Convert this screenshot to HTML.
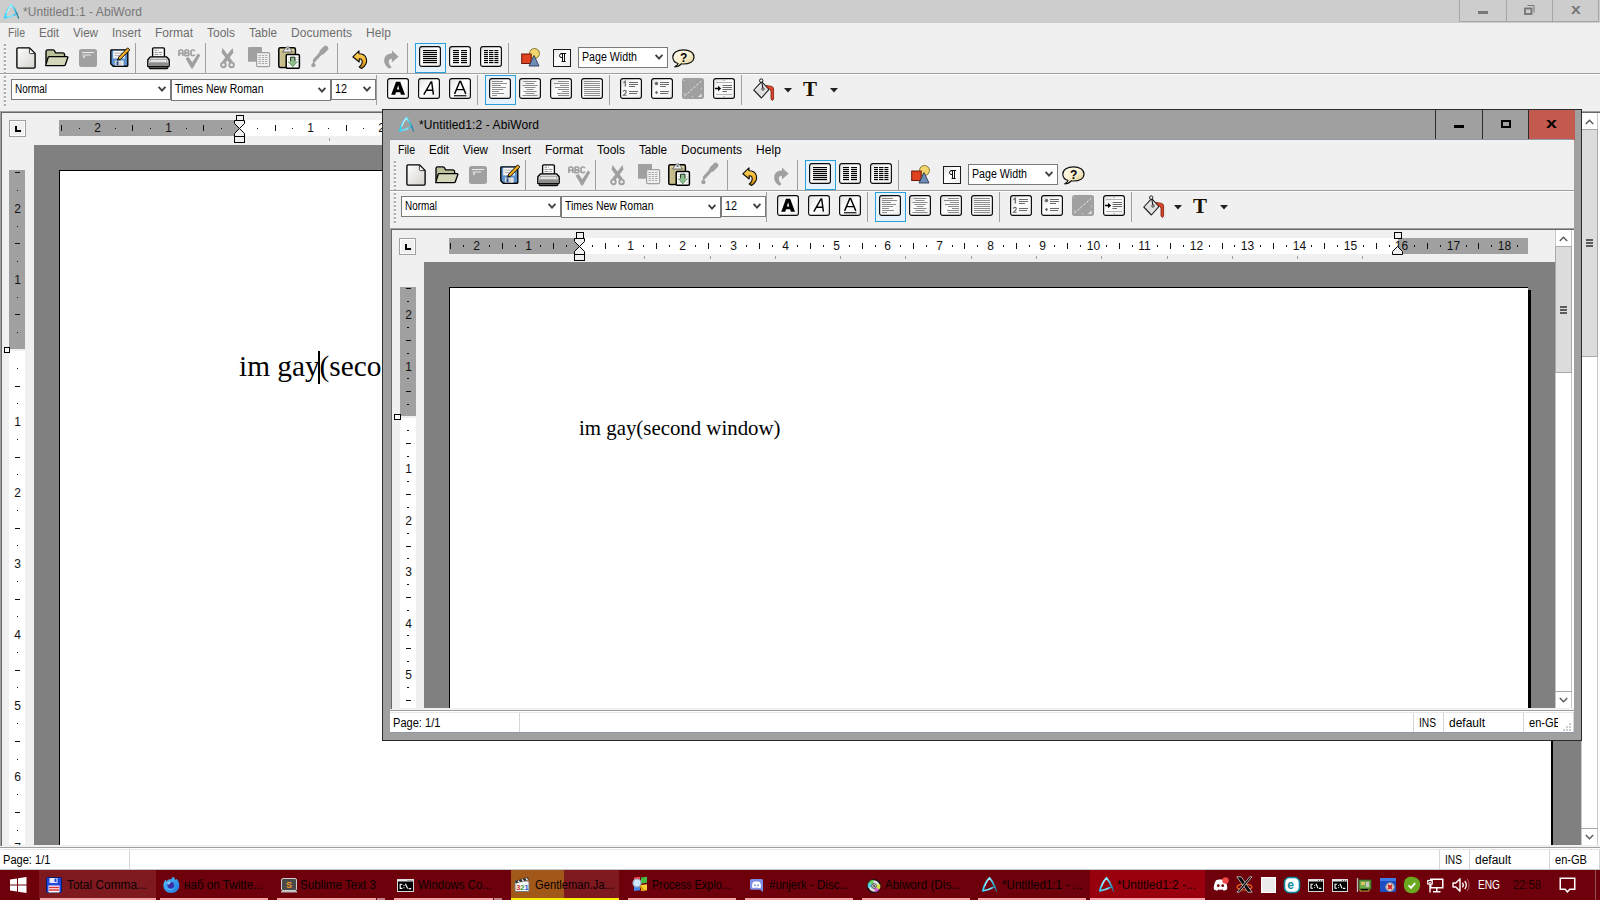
<!DOCTYPE html><html><head><meta charset="utf-8"><title>AbiWord</title><style>
html,body{margin:0;padding:0}
body{width:1600px;height:900px;overflow:hidden;position:relative;background:#f0f0f0;font-family:"Liberation Sans",sans-serif}
div,svg{position:absolute;box-sizing:border-box}
svg{overflow:visible}
.w{overflow:hidden}

</style></head><body>
<div style="left:0px;top:0px;width:1600px;height:23px;background:#cdcdcd;"></div>
<svg style="left:2.5px;top:2.5px;" width="17" height="17" viewBox="0 0 17 17"><defs><linearGradient id="ag1" gradientUnits="userSpaceOnUse" x1="1" y1="0" x2="16" y2="0"><stop offset="0" stop-color="#1cd2ff"/><stop offset="0.35" stop-color="#6fe4ff"/><stop offset="0.55" stop-color="#7fe6ff"/><stop offset="0.75" stop-color="#34b4d8"/><stop offset="1" stop-color="#1f6c8c"/></linearGradient></defs><path d="M12 11.6 C9 13.3 5.4 14.4 1.8 14.9 C3 10 5.5 4.7 8.5 1.8 C10.8 4.2 12.8 8 14 11.2" fill="none" stroke="url(#ag1)" stroke-width="1.75" stroke-linecap="round" stroke-linejoin="round"/><path d="M13.6 10.2 C14.4 12 15 13.6 15.5 15.1" fill="none" stroke="url(#ag1)" stroke-width="1.25" stroke-linecap="round"/><path d="M4 10 C5.2 6.8 6.8 4.1 8.3 2.7" fill="none" stroke="#fff" stroke-width="0.75" stroke-linecap="round" opacity="0.8"/></svg>
<div style="left:23px;top:3.84px;font:normal normal 12px/16px 'Liberation Sans',sans-serif;color:#777;white-space:pre;letter-spacing:0.055px;">*Untitled1:1 - AbiWord</div>
<div style="left:1459px;top:-1px;width:48px;height:23px;background:#cdcdcd;border:1px solid #a6a6a6;"></div>
<div style="left:1506px;top:-1px;width:47px;height:23px;background:#cdcdcd;border:1px solid #a6a6a6;"></div>
<div style="left:1552px;top:-1px;width:47px;height:23px;background:#cdcdcd;border:1px solid #a6a6a6;"></div>
<div style="left:1478px;top:11px;width:10px;height:3px;background:#787878;"></div>
<svg style="left:1524px;top:5px;" width="11" height="10" viewBox="0 0 11 10"><path d="M3.5 0.5 H10 V7.5" fill="none" stroke="#787878" stroke-width="1"/><rect x="1" y="3.5" width="6.5" height="5.5" fill="none" stroke="#787878" stroke-width="1.9"/></svg>
<div style="left:1571px;top:0.15px;font:normal bold 14px/19px 'Liberation Sans',sans-serif;color:#787878;white-space:pre;transform:scaleX(1.25);transform-origin:0 0;">x</div>
<div class="w" style="left:0px;top:23px;width:1600px;height:847px;background:#f0f0f0;"><div style="left:0px;top:0px;width:1600px;height:20px;background:#f0f0f0;"></div><div style="left:8px;top:1.84px;font:normal normal 12px/16px 'Liberation Sans',sans-serif;color:#6d6d6d;white-space:pre;transform:scaleX(0.8792);transform-origin:0 0;">File</div><div style="left:39px;top:1.84px;font:normal normal 12px/16px 'Liberation Sans',sans-serif;color:#6d6d6d;white-space:pre;transform:scaleX(0.9672);transform-origin:0 0;">Edit</div><div style="left:73px;top:1.84px;font:normal normal 12px/16px 'Liberation Sans',sans-serif;color:#6d6d6d;white-space:pre;transform:scaleX(0.9692);transform-origin:0 0;">View</div><div style="left:112px;top:1.84px;font:normal normal 12px/16px 'Liberation Sans',sans-serif;color:#6d6d6d;white-space:pre;transform:scaleX(0.9663);transform-origin:0 0;">Insert</div><div style="left:155px;top:1.84px;font:normal normal 12px/16px 'Liberation Sans',sans-serif;color:#6d6d6d;white-space:pre;transform:scaleX(0.9999);transform-origin:0 0;">Format</div><div style="left:207px;top:1.84px;font:normal normal 12px/16px 'Liberation Sans',sans-serif;color:#6d6d6d;white-space:pre;transform:scaleX(0.9995);transform-origin:0 0;">Tools</div><div style="left:249px;top:1.84px;font:normal normal 12px/16px 'Liberation Sans',sans-serif;color:#6d6d6d;white-space:pre;transform:scaleX(0.9760);transform-origin:0 0;">Table</div><div style="left:291px;top:1.84px;font:normal normal 12px/16px 'Liberation Sans',sans-serif;color:#6d6d6d;white-space:pre;letter-spacing:0.039px;">Documents</div><div style="left:366px;top:1.84px;font:normal normal 12px/16px 'Liberation Sans',sans-serif;color:#6d6d6d;white-space:pre;letter-spacing:0.107px;">Help</div><svg style="left:3px;top:21px;" width="3" height="30" viewBox="0 0 3 30"><rect x="1" y="0" width="2" height="2" fill="#adadad"/><rect x="0" y="1" width="1" height="1" fill="#cfcfcf"/><rect x="1" y="2" width="2" height="1" fill="#fbfbfb"/><rect x="1" y="4" width="2" height="2" fill="#adadad"/><rect x="0" y="5" width="1" height="1" fill="#cfcfcf"/><rect x="1" y="6" width="2" height="1" fill="#fbfbfb"/><rect x="1" y="8" width="2" height="2" fill="#adadad"/><rect x="0" y="9" width="1" height="1" fill="#cfcfcf"/><rect x="1" y="10" width="2" height="1" fill="#fbfbfb"/><rect x="1" y="12" width="2" height="2" fill="#adadad"/><rect x="0" y="13" width="1" height="1" fill="#cfcfcf"/><rect x="1" y="14" width="2" height="1" fill="#fbfbfb"/><rect x="1" y="16" width="2" height="2" fill="#adadad"/><rect x="0" y="17" width="1" height="1" fill="#cfcfcf"/><rect x="1" y="18" width="2" height="1" fill="#fbfbfb"/><rect x="1" y="20" width="2" height="2" fill="#adadad"/><rect x="0" y="21" width="1" height="1" fill="#cfcfcf"/><rect x="1" y="22" width="2" height="1" fill="#fbfbfb"/><rect x="1" y="24" width="2" height="2" fill="#adadad"/><rect x="0" y="25" width="1" height="1" fill="#cfcfcf"/><rect x="1" y="26" width="2" height="1" fill="#fbfbfb"/><rect x="1" y="28" width="2" height="2" fill="#adadad"/><rect x="0" y="29" width="1" height="1" fill="#cfcfcf"/><rect x="1" y="30" width="2" height="1" fill="#fbfbfb"/></svg><svg style="left:0px;top:0px;" width="1" height="1" viewBox="0 0 1 1"><defs><linearGradient id="bg" x1="0" y1="0" x2="1" y2="1"><stop offset="0" stop-color="#e2e2e2"/><stop offset="0.45" stop-color="#ffffff"/><stop offset="1" stop-color="#ececec"/></linearGradient><linearGradient id="bk" x1="0" y1="0" x2="1" y2="1"><stop offset="0" stop-color="#f4f4f4"/><stop offset="0.5" stop-color="#dcdcdc"/><stop offset="1" stop-color="#f0f0f0"/></linearGradient><linearGradient id="hb" x1="0" y1="0" x2="0.8" y2="1"><stop offset="0" stop-color="#fffdf2"/><stop offset="0.55" stop-color="#faf0d0"/><stop offset="1" stop-color="#dcc98e"/></linearGradient><linearGradient id="pg" x1="0" y1="0" x2="1" y2="1"><stop offset="0" stop-color="#ffffff"/><stop offset="1" stop-color="#d4d2cc"/></linearGradient></defs></svg><svg style="left:16px;top:24px;" width="20" height="22" viewBox="0 0 20 22"><path d="M2 0.9 H13.6 L19.1 6.4 V20 Q19.1 21.1 18 21.1 H2 Q0.9 21.1 0.9 20 V2 Q0.9 0.9 2 0.9 Z" fill="url(#pg)" stroke="#000" stroke-width="1.35" stroke-linejoin="round"/><path d="M13.4 1.2 V5.6 Q13.4 6.6 14.4 6.6 H18.8 Z" fill="#fafaf6" stroke="#2a2a2a" stroke-width="0.9" stroke-linejoin="round"/></svg><svg style="left:45px;top:26px;" width="24" height="18" viewBox="0 0 24 18"><path d="M1 14.5 V2.6 Q1 0.9 2.8 0.9 H8 Q9.3 0.9 9.8 2.2 L10.4 3.9 H17.6 Q19.6 3.9 19.6 5.8 V8" fill="#bdc29c" stroke="#000" stroke-width="1.35" stroke-linejoin="round"/><path d="M1 16.6 Q0.6 16.6 0.9 15.6 L3.2 8.3 Q3.5 7.6 4.4 7.6 H22 Q23.1 7.6 22.8 8.6 L20.3 15.8 Q20 16.6 19 16.6 Z" fill="#d3d6b8" stroke="#000" stroke-width="1.35" stroke-linejoin="round"/></svg><svg style="left:79px;top:26px;" width="18" height="18" viewBox="0 0 18 18"><rect x="0" y="0" width="18" height="18" rx="2.5" fill="#a0a0a0"/><path d="M3 3.5 H15 M3.5 6 H12" stroke="#ececec" stroke-width="1.1" fill="none"/><path d="M3.8 7.2 H6.6 L4.6 9.6 Z" fill="#ececec"/></svg><svg style="left:110px;top:24px;" width="21" height="21" viewBox="0 0 21 21"><path d="M1.6 2.8 H17 Q17.8 2.8 17.8 3.6 V18.4 Q17.8 19.2 17 19.2 H3.2 L0.8 16.8 V3.6 Q0.8 2.8 1.6 2.8 Z" fill="#5a90cc" stroke="#000" stroke-width="1.35" stroke-linejoin="round"/><rect x="3.2" y="3.8" width="11.6" height="7.6" fill="#f6f6f6"/><path d="M4.5 6.2 H12 M4.5 8.6 H10.5" stroke="#aaa" stroke-width="0.9"/><rect x="4.8" y="13.6" width="9" height="5" fill="#d4d4d4"/><rect x="6.6" y="14.4" width="1.8" height="3.8" fill="#23498a"/><path d="M12 13.6 V18.6" stroke="#fff" stroke-width="0.8"/><path d="M17.6 0.8 L19.8 3 L10.6 12.2 L7.6 13.2 L8.6 10.2 Z" fill="#f2ae22" stroke="#0c0c0c" stroke-width="1" stroke-linejoin="round"/><path d="M7.6 13.2 L8.3 11 L9.9 12.5 Z" fill="#222"/></svg><div style="left:135px;top:20px;width:1px;height:30px;background:#a0a0a0;"></div><svg style="left:147px;top:24px;" width="23" height="23" viewBox="0 0 23 23"><path d="M5.6 11 V1.8 Q5.6 0.8 6.6 0.8 H16.4 Q17.4 0.8 17.4 1.8 V11 Z" fill="#fff" stroke="#000" stroke-width="1.35"/><path d="M7.6 3.2 H10 M11.2 3.2 H12 M7.6 5.4 H10.6 M11.6 5.4 H15.4 M7.6 7.6 H11.4 M12.6 7.6 H14.6 M7.6 9.8 H15.4" stroke="#8a8a8a" stroke-width="1"/><path d="M0.8 19.4 V13.4 Q0.8 12.6 1.4 12 L3.6 9.8 H19.4 L21.6 12 Q22.2 12.6 22.2 13.4 V18.8 Q22.2 19.6 21.4 19.6 H1.6 Q0.8 19.6 0.8 18.8 Z" fill="#d9d9d9" stroke="#000" stroke-width="1.35" stroke-linejoin="round"/><rect x="1.6" y="15.6" width="19.8" height="3.4" fill="#8e8e8a"/><rect x="3.2" y="12.6" width="16.6" height="2.8" fill="#fbfbfb" stroke="#777" stroke-width="0.5"/><path d="M4.5 14 H18.5" stroke="#999" stroke-width="0.8" stroke-dasharray="1.2 0.8"/><path d="M2.2 19.8 H20.8 V20.8 Q20.8 21.6 20 21.6 H3 Q2.2 21.6 2.2 20.8 Z" fill="#6e6e6a" stroke="#0c0c0c" stroke-width="1.1"/></svg><svg style="left:178px;top:26px;" width="23" height="20" viewBox="0 0 23 20"><g fill="none" stroke="#a0a0a0" stroke-width="1.7" stroke-linejoin="round"><path d="M0.9 7 V2.6 Q0.9 1 2.5 1 H3.3 Q4.9 1 4.9 2.6 V7 M0.9 4.4 H4.9"/><path d="M7 1 V6.6 H9.6 Q11 6.6 11 5.2 Q11 3.8 9.6 3.8 H7 M9.4 3.8 Q10.7 3.8 10.7 2.4 Q10.7 1 9.4 1 H7"/><path d="M16.8 2.2 Q16.4 1 15 1 H14.6 Q13 1 13 2.8 V4.8 Q13 6.6 14.6 6.6 H15 Q16.4 6.6 16.8 5.4"/></g><path d="M7.6 9.6 L10.6 8 L14.2 13.2 L20 4.4 L22.3 6.2 L14.8 19.4 L13.4 19.4 Z" fill="#a0a0a0"/></svg><div style="left:205px;top:20px;width:1px;height:30px;background:#a0a0a0;"></div><svg style="left:220px;top:25px;" width="16" height="21" viewBox="0 0 16 21"><path d="M2.4 0 L5.2 3.4 L12.8 13.6 L10 15.8 L1.6 4.4 Z" fill="#a0a0a0"/><path d="M12.6 0 L9.8 3.4 L2.2 13.6 L5 15.8 L13.4 4.4 Z" fill="#a0a0a0"/><circle cx="3.4" cy="16.9" r="2.3" fill="#f0f0f0" stroke="#a0a0a0" stroke-width="1.9"/><circle cx="11.6" cy="16.9" r="2.3" fill="#f0f0f0" stroke="#a0a0a0" stroke-width="1.9"/></svg><svg style="left:248px;top:24px;" width="23" height="21" viewBox="0 0 23 21"><rect x="0" y="0" width="14" height="14.8" rx="1" fill="#a0a0a0"/><rect x="8.6" y="5.6" width="13" height="14" rx="1.2" fill="#f0f0f0" stroke="#a0a0a0" stroke-width="1.2"/><path d="M10.5 8.5 H19.5 M10.5 10.5 H19.5 M10.5 12.5 H19.5 M10.5 14.5 H19.5 M10.5 16.5 H19.5" stroke="#a8a8a8" stroke-width="1" stroke-dasharray="2.3 1"/></svg><svg style="left:278px;top:23px;" width="23" height="24" viewBox="0 0 23 24"><rect x="0.8" y="1.8" width="16.6" height="19.6" rx="1.5" fill="#d9cf9f" stroke="#000" stroke-width="1.5"/><path d="M2.5 6 H16 M2.5 8 H16 M2.5 10 H16 M2.5 12 H16 M2.5 14 H16 M2.5 16 H16 M2.5 18 H16 M2.5 20 H16" stroke="#a89e6e" stroke-width="0.8"/><path d="M4.6 6 L7 2.6 Q8 0.8 9.6 0.8 Q11.2 0.8 12.2 2.6 L14.4 6 Z" fill="#e8e8e8" stroke="#555" stroke-width="0.8"/><rect x="8.6" y="2.2" width="2" height="1.6" fill="#666"/><rect x="8.2" y="8.6" width="13.2" height="13.6" rx="1.2" fill="#fff" stroke="#000" stroke-width="1.5"/><path d="M10 11.5 H11.6 M18.2 11.5 H19.8 M10 13.5 H11.6 M18.2 13.5 H19.8 M10 19.5 H11.6 M18.2 19.5 H19.8" stroke="#c4c4c4" stroke-width="0.8"/><path d="M12.6 11.2 H17 V15.4 H19.6 L14.8 20.8 L10 15.4 H12.6 Z" fill="#8fc08f"/><path d="M12.6 15.4 V11.2 H17 V15.4" fill="none" stroke="#1a2a1a" stroke-width="1"/><path d="M10 15.4 L14.8 20.8 L19.6 15.4" fill="none" stroke="#5c8c5c" stroke-width="0.9"/></svg><svg style="left:311px;top:23px;" width="18" height="22" viewBox="0 0 18 22"><path d="M14.6 2.4 L11.2 5.8" stroke="#a0a0a0" stroke-width="5.4" stroke-linecap="round"/><path d="M10.6 6.4 L3.4 14.4" stroke="#a0a0a0" stroke-width="3.2" fill="none" stroke-linecap="round"/><path d="M3.2 14.6 L2.4 17.4" stroke="#a0a0a0" stroke-width="1.6"/><circle cx="2.4" cy="19.2" r="2.1" fill="#a0a0a0"/></svg><div style="left:337px;top:20px;width:1px;height:30px;background:#a0a0a0;"></div><svg style="left:352px;top:27px;" width="16" height="19" viewBox="0 0 16 19"><defs><linearGradient id="ug" x1="0" y1="0" x2="0" y2="1"><stop offset="0" stop-color="#ffe070"/><stop offset="0.5" stop-color="#f2b430"/><stop offset="1" stop-color="#c88410"/></linearGradient></defs><path d="M7 0.8 L0.8 6.8 L7.2 12 V8.8 C9.6 8.8 10.8 10.6 10 13.2 C9.5 14.8 8.4 16.2 7.2 17 L9.6 18.4 C13.2 16.6 15.4 12.6 14.4 8.8 C13.4 5.2 10.4 3.8 7 3.8 Z" fill="url(#ug)" stroke="#0c0c0c" stroke-width="1.1" stroke-linejoin="round"/></svg><svg style="left:383px;top:27px;" width="16" height="19" viewBox="0 0 16 19"><path d="M9 0.4 L15.6 6.8 L8.8 12.4 V8.8 C6.4 8.8 5.2 10.6 6 13.2 C6.5 14.8 7.6 16.2 8.8 17 L6.4 18.8 C2.6 16.8 0.4 12.6 1.4 8.6 C2.4 5 5.4 3.6 9 3.6 Z" fill="#a0a0a0"/></svg><div style="left:407px;top:20px;width:1px;height:30px;background:#a0a0a0;"></div><div style="left:415px;top:20px;width:31px;height:30px;background:#e5f1fb;border:1px solid #2aa0da;"></div><svg style="left:419px;top:23px;" width="22" height="21" viewBox="0 0 22 21"><rect x="0.6" y="0.6" width="20.8" height="19.8" rx="2.2" fill="url(#bg)" stroke="#0a0a0a" stroke-width="1.15"/><rect x="4" y="4" width="14" height="1.15" fill="#000"/><rect x="4" y="6" width="14" height="1.15" fill="#000"/><rect x="4" y="8" width="14" height="1.15" fill="#000"/><rect x="4" y="10" width="14" height="1.15" fill="#000"/><rect x="4" y="12" width="14" height="1.15" fill="#000"/><rect x="4" y="14" width="14" height="1.15" fill="#000"/><rect x="4" y="16" width="14" height="1.15" fill="#000"/></svg><svg style="left:449px;top:23px;" width="22" height="21" viewBox="0 0 22 21"><rect x="0.6" y="0.6" width="20.8" height="19.8" rx="2.2" fill="url(#bg)" stroke="#0a0a0a" stroke-width="1.15"/><rect x="4" y="4" width="6" height="1.15" fill="#000"/><rect x="4" y="6" width="6" height="1.15" fill="#000"/><rect x="4" y="8" width="6" height="1.15" fill="#000"/><rect x="4" y="10" width="6" height="1.15" fill="#000"/><rect x="4" y="12" width="6" height="1.15" fill="#000"/><rect x="4" y="14" width="6" height="1.15" fill="#000"/><rect x="4" y="16" width="6" height="1.15" fill="#000"/><rect x="12" y="4" width="6" height="1.15" fill="#000"/><rect x="12" y="6" width="6" height="1.15" fill="#000"/><rect x="12" y="8" width="6" height="1.15" fill="#000"/><rect x="12" y="10" width="6" height="1.15" fill="#000"/><rect x="12" y="12" width="6" height="1.15" fill="#000"/><rect x="12" y="14" width="6" height="1.15" fill="#000"/><rect x="12" y="16" width="6" height="1.15" fill="#000"/></svg><svg style="left:480px;top:23px;" width="22" height="21" viewBox="0 0 22 21"><rect x="0.6" y="0.6" width="20.8" height="19.8" rx="2.2" fill="url(#bg)" stroke="#0a0a0a" stroke-width="1.15"/><rect x="4" y="4" width="4" height="1.15" fill="#000"/><rect x="4" y="6" width="4" height="1.15" fill="#000"/><rect x="4" y="8" width="4" height="1.15" fill="#000"/><rect x="4" y="10" width="4" height="1.15" fill="#000"/><rect x="4" y="12" width="4" height="1.15" fill="#000"/><rect x="4" y="14" width="4" height="1.15" fill="#000"/><rect x="4" y="16" width="4" height="1.15" fill="#000"/><rect x="9" y="4" width="4.4" height="1.15" fill="#000"/><rect x="9" y="6" width="4.4" height="1.15" fill="#000"/><rect x="9" y="8" width="4.4" height="1.15" fill="#000"/><rect x="9" y="10" width="4.4" height="1.15" fill="#000"/><rect x="9" y="12" width="4.4" height="1.15" fill="#000"/><rect x="9" y="14" width="4.4" height="1.15" fill="#000"/><rect x="9" y="16" width="4.4" height="1.15" fill="#000"/><rect x="14.4" y="4" width="3.9999999999999982" height="1.15" fill="#000"/><rect x="14.4" y="6" width="3.9999999999999982" height="1.15" fill="#000"/><rect x="14.4" y="8" width="3.9999999999999982" height="1.15" fill="#000"/><rect x="14.4" y="10" width="3.9999999999999982" height="1.15" fill="#000"/><rect x="14.4" y="12" width="3.9999999999999982" height="1.15" fill="#000"/><rect x="14.4" y="14" width="3.9999999999999982" height="1.15" fill="#000"/><rect x="14.4" y="16" width="3.9999999999999982" height="1.15" fill="#000"/></svg><div style="left:508px;top:20px;width:1px;height:30px;background:#a0a0a0;"></div><svg style="left:521px;top:25px;" width="20" height="19" viewBox="0 0 20 19"><circle cx="13.5" cy="5.5" r="5" fill="#f2d66d" stroke="#7a6a2a" stroke-width="0.9"/><rect x="0.7" y="6" width="9.5" height="9.5" fill="#e0421e" stroke="#6a1a0a" stroke-width="1"/><path d="M13 7.5 L18 18 H8 Z" fill="#6d8db5" stroke="#2a3a55" stroke-width="0.9"/></svg><svg style="left:553px;top:26px;" width="18" height="18" viewBox="0 0 18 18"><rect x="0.5" y="0.5" width="17" height="17" fill="url(#bg)" stroke="#1a1a1a"/><path d="M9.5 4.5 V12.5 M11.5 4.5 V12.5 M7.6 4.5 H13.2 M8.6 12.5 H12.6" fill="none" stroke="#000" stroke-width="0.95"/><path d="M9.5 4.5 Q6.4 4.5 6.4 6.6 Q6.4 8.7 9.5 8.7" fill="none" stroke="#000" stroke-width="0.95"/></svg><div style="left:578px;top:24px;width:90px;height:21px;background:#fff;border:1px solid #7a7a7a;"></div><div style="left:581.5px;top:25.67px;font:normal normal 12.5px/17px 'Liberation Sans',sans-serif;color:#000;white-space:pre;transform:scaleX(0.8512);transform-origin:0 0;">Page Width</div><svg style="left:655px;top:31px;" width="8" height="7" viewBox="0 0 8 7"><path d="M0.6 0.9 L4 4.6 L7.4 0.9" fill="none" stroke="#404040" stroke-width="1.9"/></svg><svg style="left:672px;top:26px;" width="23" height="19" viewBox="0 0 23 19"><path d="M6 14.5 C2.5 13.5 0.8 11 0.8 8 C0.8 3.5 5.5 0.8 11.5 0.8 C17.5 0.8 22 3.5 22 8 C22 12.5 17.5 15 11.5 15 C10.8 15 10 15 9.3 14.8 C7.5 16.8 5 17.8 2.5 17.8 C4.5 17 5.8 15.8 6 14.5 Z" fill="url(#hb)" stroke="#111" stroke-width="1.2"/><text x="8" y="12.5" font-family="Liberation Sans" font-weight="bold" font-size="12" fill="#000">?</text></svg><div style="left:0px;top:50px;width:1600px;height:1px;background:#a0a0a0;"></div><div style="left:0px;top:51px;width:1600px;height:1px;background:#fdfdfd;"></div><svg style="left:3px;top:53px;" width="3" height="32" viewBox="0 0 3 32"><rect x="1" y="0" width="2" height="2" fill="#adadad"/><rect x="0" y="1" width="1" height="1" fill="#cfcfcf"/><rect x="1" y="2" width="2" height="1" fill="#fbfbfb"/><rect x="1" y="4" width="2" height="2" fill="#adadad"/><rect x="0" y="5" width="1" height="1" fill="#cfcfcf"/><rect x="1" y="6" width="2" height="1" fill="#fbfbfb"/><rect x="1" y="8" width="2" height="2" fill="#adadad"/><rect x="0" y="9" width="1" height="1" fill="#cfcfcf"/><rect x="1" y="10" width="2" height="1" fill="#fbfbfb"/><rect x="1" y="12" width="2" height="2" fill="#adadad"/><rect x="0" y="13" width="1" height="1" fill="#cfcfcf"/><rect x="1" y="14" width="2" height="1" fill="#fbfbfb"/><rect x="1" y="16" width="2" height="2" fill="#adadad"/><rect x="0" y="17" width="1" height="1" fill="#cfcfcf"/><rect x="1" y="18" width="2" height="1" fill="#fbfbfb"/><rect x="1" y="20" width="2" height="2" fill="#adadad"/><rect x="0" y="21" width="1" height="1" fill="#cfcfcf"/><rect x="1" y="22" width="2" height="1" fill="#fbfbfb"/><rect x="1" y="24" width="2" height="2" fill="#adadad"/><rect x="0" y="25" width="1" height="1" fill="#cfcfcf"/><rect x="1" y="26" width="2" height="1" fill="#fbfbfb"/><rect x="1" y="28" width="2" height="2" fill="#adadad"/><rect x="0" y="29" width="1" height="1" fill="#cfcfcf"/><rect x="1" y="30" width="2" height="1" fill="#fbfbfb"/></svg><div style="left:11px;top:56px;width:160px;height:21px;background:#fff;border:1px solid #7a7a7a;"></div><div style="left:14.5px;top:57.67px;font:normal normal 12.5px/17px 'Liberation Sans',sans-serif;color:#000;white-space:pre;transform:scaleX(0.7944);transform-origin:0 0;">Normal</div><svg style="left:158px;top:63px;" width="8" height="7" viewBox="0 0 8 7"><path d="M0.6 0.9 L4 4.6 L7.4 0.9" fill="none" stroke="#404040" stroke-width="1.9"/></svg><div style="left:171px;top:56px;width:160px;height:22px;background:#fff;border:1px solid #7a7a7a;"></div><div style="left:174.5px;top:57.67px;font:normal normal 12.5px/17px 'Liberation Sans',sans-serif;color:#000;white-space:pre;transform:scaleX(0.8364);transform-origin:0 0;">Times New Roman</div><svg style="left:318px;top:64px;" width="8" height="7" viewBox="0 0 8 7"><path d="M0.6 0.9 L4 4.6 L7.4 0.9" fill="none" stroke="#404040" stroke-width="1.9"/></svg><div style="left:331px;top:56px;width:45px;height:21px;background:#fff;border:1px solid #7a7a7a;"></div><div style="left:334.5px;top:57.67px;font:normal normal 12.5px/17px 'Liberation Sans',sans-serif;color:#000;white-space:pre;transform:scaleX(0.8631);transform-origin:0 0;">12</div><svg style="left:363px;top:63px;" width="8" height="7" viewBox="0 0 8 7"><path d="M0.6 0.9 L4 4.6 L7.4 0.9" fill="none" stroke="#404040" stroke-width="1.9"/></svg><div style="left:376px;top:52px;width:1px;height:30px;background:#a0a0a0;"></div><svg style="left:387px;top:55px;" width="22" height="21" viewBox="0 0 22 21"><rect x="0.6" y="0.6" width="20.8" height="19.8" rx="2.2" fill="url(#bg)" stroke="#0a0a0a" stroke-width="1.15"/><path d="M4.2 16.7 L9 3.7 H13.2 L18 16.7 H13.9 L13.2 14.3 H9 L8.3 16.7 Z M9.9 11.5 H12.3 L11.1 7.3 Z" fill="#000" fill-rule="evenodd"/></svg><svg style="left:418px;top:55px;" width="22" height="21" viewBox="0 0 22 21"><rect x="0.6" y="0.6" width="20.8" height="19.8" rx="2.2" fill="url(#bg)" stroke="#0a0a0a" stroke-width="1.15"/><path d="M5.8 16.7 L13 3.9 H13.7 L15.4 16.7 M8.5 12.2 H14.7" fill="none" stroke="#000" stroke-width="1.45"/></svg><svg style="left:449px;top:55px;" width="22" height="21" viewBox="0 0 22 21"><rect x="0.6" y="0.6" width="20.8" height="19.8" rx="2.2" fill="url(#bg)" stroke="#0a0a0a" stroke-width="1.15"/><path d="M5.6 15.9 L10.8 3.4 H11.6 L16.8 15.9 M7.5 11.6 H14.9" fill="none" stroke="#000" stroke-width="1.45"/><rect x="5" y="17.2" width="12.4" height="1.1" fill="#000"/></svg><div style="left:477px;top:52px;width:1px;height:30px;background:#a0a0a0;"></div><div style="left:485px;top:52px;width:31px;height:30px;background:#e5f1fb;border:1px solid #2aa0da;"></div><svg style="left:489px;top:55px;" width="22" height="21" viewBox="0 0 22 21"><rect x="0.6" y="0.6" width="20.8" height="19.8" rx="2.2" fill="url(#bg)" stroke="#0a0a0a" stroke-width="1.15"/><rect x="3" y="3" width="0" height="1" fill="#8c8c8c"/><rect x="3" y="5" width="0" height="1" fill="#8c8c8c"/><rect x="3" y="7" width="0" height="1" fill="#8c8c8c"/><rect x="3" y="9" width="0" height="1" fill="#8c8c8c"/><rect x="3" y="11" width="0" height="1" fill="#8c8c8c"/><rect x="3" y="13" width="0" height="1" fill="#8c8c8c"/><rect x="3" y="15" width="0" height="1" fill="#8c8c8c"/><rect x="3" y="17" width="0" height="1" fill="#8c8c8c"/><rect x="3" y="3" width="11" height="1" fill="#8c8c8c"/><rect x="3" y="5" width="15" height="1" fill="#8c8c8c"/><rect x="3" y="7" width="9" height="1" fill="#8c8c8c"/><rect x="3" y="9" width="14" height="1" fill="#8c8c8c"/><rect x="3" y="11" width="11" height="1" fill="#8c8c8c"/><rect x="3" y="13" width="7" height="1" fill="#8c8c8c"/><rect x="3" y="15" width="12" height="1" fill="#8c8c8c"/><rect x="3" y="17" width="5" height="1" fill="#8c8c8c"/></svg><svg style="left:519px;top:55px;" width="22" height="21" viewBox="0 0 22 21"><rect x="0.6" y="0.6" width="20.8" height="19.8" rx="2.2" fill="url(#bg)" stroke="#0a0a0a" stroke-width="1.15"/><rect x="4.5" y="3" width="13" height="1" fill="#8c8c8c"/><rect x="6.5" y="5" width="9" height="1" fill="#8c8c8c"/><rect x="3.5" y="7" width="15" height="1" fill="#8c8c8c"/><rect x="5.5" y="9" width="11" height="1" fill="#8c8c8c"/><rect x="7.5" y="11" width="7" height="1" fill="#8c8c8c"/><rect x="4.5" y="13" width="13" height="1" fill="#8c8c8c"/><rect x="6.5" y="15" width="9" height="1" fill="#8c8c8c"/><rect x="3.5" y="17" width="15" height="1" fill="#8c8c8c"/></svg><svg style="left:550px;top:55px;" width="22" height="21" viewBox="0 0 22 21"><rect x="0.6" y="0.6" width="20.8" height="19.8" rx="2.2" fill="url(#bg)" stroke="#0a0a0a" stroke-width="1.15"/><rect x="8" y="3" width="11" height="1" fill="#8c8c8c"/><rect x="4" y="5" width="15" height="1" fill="#8c8c8c"/><rect x="10" y="7" width="9" height="1" fill="#8c8c8c"/><rect x="5" y="9" width="14" height="1" fill="#8c8c8c"/><rect x="8" y="11" width="11" height="1" fill="#8c8c8c"/><rect x="12" y="13" width="7" height="1" fill="#8c8c8c"/><rect x="7" y="15" width="12" height="1" fill="#8c8c8c"/><rect x="8" y="17" width="11" height="1" fill="#8c8c8c"/></svg><svg style="left:581px;top:55px;" width="22" height="21" viewBox="0 0 22 21"><rect x="0.6" y="0.6" width="20.8" height="19.8" rx="2.2" fill="url(#bg)" stroke="#0a0a0a" stroke-width="1.15"/><rect x="3" y="3" width="16" height="1" fill="#8c8c8c"/><rect x="3" y="5" width="16" height="1" fill="#8c8c8c"/><rect x="3" y="7" width="16" height="1" fill="#8c8c8c"/><rect x="3" y="9" width="16" height="1" fill="#8c8c8c"/><rect x="3" y="11" width="16" height="1" fill="#8c8c8c"/><rect x="3" y="13" width="16" height="1" fill="#8c8c8c"/><rect x="3" y="15" width="16" height="1" fill="#8c8c8c"/><rect x="3" y="17" width="16" height="1" fill="#8c8c8c"/></svg><div style="left:609px;top:52px;width:1px;height:30px;background:#a0a0a0;"></div><svg style="left:620px;top:55px;" width="22" height="21" viewBox="0 0 22 21"><rect x="0.6" y="0.6" width="20.8" height="19.8" rx="2.2" fill="url(#bg)" stroke="#0a0a0a" stroke-width="1.15"/><path d="M3.5 4.8 L5.3 3.3 V8.4" fill="none" stroke="#6a6a6a" stroke-width="1.2"/><path d="M3.4 13.8 Q3.4 12.4 4.9 12.4 Q6.3 12.4 6.3 13.7 Q6.3 14.8 3.5 17.2 H6.6" fill="none" stroke="#6a6a6a" stroke-width="1.1"/><rect x="9" y="4" width="9" height="1" fill="#6a6a6a"/><rect x="9" y="6" width="9" height="1" fill="#6a6a6a"/><rect x="9" y="8" width="6" height="1" fill="#6a6a6a"/><rect x="9" y="13" width="9" height="1" fill="#6a6a6a"/><rect x="9" y="15" width="8" height="1" fill="#6a6a6a"/></svg><svg style="left:651px;top:55px;" width="22" height="21" viewBox="0 0 22 21"><rect x="0.6" y="0.6" width="20.8" height="19.8" rx="2.2" fill="url(#bg)" stroke="#0a0a0a" stroke-width="1.15"/><circle cx="5.5" cy="5.5" r="1.7" fill="#6a6a6a"/><path d="M5.5 12.8 L7.2 14.5 L5.5 16.2 L3.8 14.5 Z" fill="#6a6a6a"/><rect x="9" y="4" width="9" height="1" fill="#6a6a6a"/><rect x="9" y="6" width="9" height="1" fill="#6a6a6a"/><rect x="9" y="8" width="6" height="1" fill="#6a6a6a"/><rect x="9" y="13" width="9" height="1" fill="#6a6a6a"/><rect x="9" y="15" width="8" height="1" fill="#6a6a6a"/></svg><svg style="left:682px;top:55px;" width="22" height="21" viewBox="0 0 22 21"><rect x="0" y="0" width="22" height="21" rx="2.5" fill="#a0a0a0"/><path d="M2.5 18 L19.5 3" stroke="#ececec" stroke-width="1" stroke-dasharray="2.4 1.6"/><path d="M19.5 15.5 V19 H16 Z" fill="#e4e4e4"/><rect x="1.5" y="2" width="1" height="1" fill="#ddd"/><rect x="19" y="10.5" width="1" height="1" fill="#ddd"/><rect x="10" y="18" width="1" height="1" fill="#ddd"/><rect x="2" y="15.5" width="1" height="1" fill="#ddd"/></svg><svg style="left:713px;top:55px;" width="22" height="21" viewBox="0 0 22 21"><rect x="0.6" y="0.6" width="20.8" height="19.8" rx="2.2" fill="url(#bg)" stroke="#0a0a0a" stroke-width="1.15"/><path d="M3 4.5 H19 M3 16.5 H19" stroke="#b4b4b4" stroke-width="1"/><rect x="10.5" y="2" width="1" height="1" fill="#888"/><rect x="10.5" y="18" width="1" height="1" fill="#888"/><path d="M2 10.5 H6" stroke="#000" stroke-width="1.5"/><path d="M5 7.8 L8.2 10.5 L5 13.2 Z" fill="#000"/><rect x="9.5" y="7" width="9.5" height="1" fill="#6a6a6a"/><rect x="9.5" y="9" width="9.5" height="1" fill="#6a6a6a"/><rect x="9.5" y="11" width="9.5" height="1" fill="#6a6a6a"/><rect x="9.5" y="13" width="4.5" height="1" fill="#6a6a6a"/></svg><div style="left:741px;top:52px;width:1px;height:30px;background:#a0a0a0;"></div><svg style="left:753px;top:55px;" width="23" height="23" viewBox="0 0 23 23"><path d="M8.6 3.6 L16 11.4 L8.4 20 L0.8 12 Z" fill="url(#bk)" stroke="#222" stroke-width="1.1" stroke-linejoin="round"/><circle cx="8.2" cy="2.6" r="1.7" fill="#fff" stroke="#111" stroke-width="1"/><path d="M8.8 4.2 L9.8 10" stroke="#111" stroke-width="1"/><circle cx="10" cy="11" r="1.2" fill="#fff" stroke="#111" stroke-width="0.8"/><path d="M13 7.4 L18.6 8.4 Q20.6 9 20.6 11 V21 L19.4 22.6 L18 21 V13 Q17 10.6 14.6 10 Z" fill="#d8452a" stroke="#7a1a0a" stroke-width="0.8"/></svg><svg style="left:784px;top:65px;" width="8" height="5" viewBox="0 0 8 5"><path d="M0 0 H8 L4 4.5 Z" fill="#222"/></svg><div style="left:803px;top:51.91px;font:normal bold 21px/28px 'Liberation Serif',sans-serif;color:#1a1200;white-space:pre;">T</div><svg style="left:830px;top:65px;" width="8" height="5" viewBox="0 0 8 5"><path d="M0 0 H8 L4 4.5 Z" fill="#222"/></svg><div style="left:0px;top:88px;width:1600px;height:1px;background:#a0a0a0;"></div><div style="left:0px;top:89px;width:1600px;height:1px;background:#696969;"></div><div style="left:0px;top:88px;width:1px;height:735px;background:#a0a0a0;"></div><div style="left:1px;top:89px;width:1px;height:734px;background:#696969;"></div><div style="left:9px;top:97px;width:17px;height:17px;background:#f0f0f0;border:1px solid #a0a0a0;box-shadow:inset 0 0 0 1px #fff;"></div><svg style="left:15px;top:103px;" width="6" height="6" viewBox="0 0 6 6"><path d="M1 0 V5 H6" fill="none" stroke="#000" stroke-width="2"/></svg><div style="left:34px;top:122px;width:1547px;height:700px;background:#808080;"></div><div style="left:59px;top:147px;width:1492px;height:675px;background:#fff;border-left:1px solid #000;border-top:1px solid #000;"></div><div style="left:1551px;top:150px;width:2px;height:672px;background:#000;"></div><div style="left:59px;top:97px;width:180px;height:16px;background:#a0a0a0;"></div><div style="left:239px;top:97px;width:1132px;height:16px;background:#fff;"></div><div style="left:1371px;top:97px;width:180px;height:16px;background:#a0a0a0;"></div><svg style="left:0px;top:0px;" width="1581" height="127" viewBox="0 0 1581 127"><rect x="221" y="105" width="1" height="1" fill="#111"/><rect x="203" y="102" width="1" height="6" fill="#111"/><rect x="186" y="105" width="1" height="1" fill="#111"/><text x="165.16" y="109.3" font-size="12" font-family="Liberation Sans" fill="#111">1</text><rect x="150" y="105" width="1" height="1" fill="#111"/><rect x="132" y="102" width="1" height="6" fill="#111"/><rect x="115" y="105" width="1" height="1" fill="#111"/><text x="94.16" y="109.3" font-size="12" font-family="Liberation Sans" fill="#111">2</text><rect x="79" y="105" width="1" height="1" fill="#111"/><rect x="61" y="102" width="1" height="6" fill="#111"/><rect x="257" y="105" width="1" height="1" fill="#111"/><rect x="275" y="102" width="1" height="6" fill="#111"/><rect x="292" y="105" width="1" height="1" fill="#111"/><text x="307.16" y="109.3" font-size="12" font-family="Liberation Sans" fill="#111">1</text><rect x="328" y="105" width="1" height="1" fill="#111"/><rect x="346" y="102" width="1" height="6" fill="#111"/><rect x="363" y="105" width="1" height="1" fill="#111"/><text x="378.16" y="109.3" font-size="12" font-family="Liberation Sans" fill="#111">2</text><rect x="399" y="105" width="1" height="1" fill="#111"/><rect x="417" y="102" width="1" height="6" fill="#111"/><rect x="434" y="105" width="1" height="1" fill="#111"/><text x="449.16" y="109.3" font-size="12" font-family="Liberation Sans" fill="#111">3</text><rect x="470" y="105" width="1" height="1" fill="#111"/><rect x="488" y="102" width="1" height="6" fill="#111"/><rect x="505" y="105" width="1" height="1" fill="#111"/><text x="520.16" y="109.3" font-size="12" font-family="Liberation Sans" fill="#111">4</text><rect x="541" y="105" width="1" height="1" fill="#111"/><rect x="559" y="102" width="1" height="6" fill="#111"/><rect x="576" y="105" width="1" height="1" fill="#111"/><text x="591.16" y="109.3" font-size="12" font-family="Liberation Sans" fill="#111">5</text><rect x="612" y="105" width="1" height="1" fill="#111"/><rect x="630" y="102" width="1" height="6" fill="#111"/><rect x="648" y="105" width="1" height="1" fill="#111"/><text x="662.16" y="109.3" font-size="12" font-family="Liberation Sans" fill="#111">6</text><rect x="683" y="105" width="1" height="1" fill="#111"/><rect x="701" y="102" width="1" height="6" fill="#111"/><rect x="719" y="105" width="1" height="1" fill="#111"/><text x="733.16" y="109.3" font-size="12" font-family="Liberation Sans" fill="#111">7</text><rect x="754" y="105" width="1" height="1" fill="#111"/><rect x="772" y="102" width="1" height="6" fill="#111"/><rect x="790" y="105" width="1" height="1" fill="#111"/><text x="804.16" y="109.3" font-size="12" font-family="Liberation Sans" fill="#111">8</text><rect x="825" y="105" width="1" height="1" fill="#111"/><rect x="843" y="102" width="1" height="6" fill="#111"/><rect x="861" y="105" width="1" height="1" fill="#111"/><text x="875.16" y="109.3" font-size="12" font-family="Liberation Sans" fill="#111">9</text><rect x="896" y="105" width="1" height="1" fill="#111"/><rect x="914" y="102" width="1" height="6" fill="#111"/><rect x="932" y="105" width="1" height="1" fill="#111"/><text x="943.83" y="109.3" font-size="12" font-family="Liberation Sans" fill="#111">10</text><rect x="967" y="105" width="1" height="1" fill="#111"/><rect x="985" y="102" width="1" height="6" fill="#111"/><rect x="1003" y="105" width="1" height="1" fill="#111"/><text x="1015.27" y="109.3" font-size="12" font-family="Liberation Sans" fill="#111">11</text><rect x="1038" y="105" width="1" height="1" fill="#111"/><rect x="1056" y="102" width="1" height="6" fill="#111"/><rect x="1074" y="105" width="1" height="1" fill="#111"/><text x="1085.83" y="109.3" font-size="12" font-family="Liberation Sans" fill="#111">12</text><rect x="1109" y="105" width="1" height="1" fill="#111"/><rect x="1127" y="102" width="1" height="6" fill="#111"/><rect x="1145" y="105" width="1" height="1" fill="#111"/><text x="1156.83" y="109.3" font-size="12" font-family="Liberation Sans" fill="#111">13</text><rect x="1180" y="105" width="1" height="1" fill="#111"/><rect x="1198" y="102" width="1" height="6" fill="#111"/><rect x="1216" y="105" width="1" height="1" fill="#111"/><text x="1227.83" y="109.3" font-size="12" font-family="Liberation Sans" fill="#111">14</text><rect x="1251" y="105" width="1" height="1" fill="#111"/><rect x="1269" y="102" width="1" height="6" fill="#111"/><rect x="1287" y="105" width="1" height="1" fill="#111"/><text x="1298.83" y="109.3" font-size="12" font-family="Liberation Sans" fill="#111">15</text><rect x="1323" y="105" width="1" height="1" fill="#111"/><rect x="1340" y="102" width="1" height="6" fill="#111"/><rect x="1358" y="105" width="1" height="1" fill="#111"/><text x="1369.83" y="109.3" font-size="12" font-family="Liberation Sans" fill="#111">16</text><rect x="1394" y="105" width="1" height="1" fill="#111"/><rect x="1411" y="102" width="1" height="6" fill="#111"/><rect x="1429" y="105" width="1" height="1" fill="#111"/><text x="1440.83" y="109.3" font-size="12" font-family="Liberation Sans" fill="#111">17</text><rect x="1465" y="105" width="1" height="1" fill="#111"/><rect x="1482" y="102" width="1" height="6" fill="#111"/><rect x="1500" y="105" width="1" height="1" fill="#111"/><text x="1511.83" y="109.3" font-size="12" font-family="Liberation Sans" fill="#111">18</text><rect x="1536" y="105" width="1" height="1" fill="#111"/><rect x="329" y="115" width="1" height="3" fill="#a0a0a0"/><rect x="419" y="115" width="1" height="3" fill="#a0a0a0"/><rect x="510" y="115" width="1" height="3" fill="#a0a0a0"/><rect x="600" y="115" width="1" height="3" fill="#a0a0a0"/><rect x="690" y="115" width="1" height="3" fill="#a0a0a0"/><rect x="780" y="115" width="1" height="3" fill="#a0a0a0"/><rect x="871" y="115" width="1" height="3" fill="#a0a0a0"/><rect x="961" y="115" width="1" height="3" fill="#a0a0a0"/><rect x="1051" y="115" width="1" height="3" fill="#a0a0a0"/><rect x="1141" y="115" width="1" height="3" fill="#a0a0a0"/><rect x="1232" y="115" width="1" height="3" fill="#a0a0a0"/><rect x="1322" y="115" width="1" height="3" fill="#a0a0a0"/></svg><div style="left:9px;top:147px;width:16px;height:179px;background:#a0a0a0;"></div><div style="left:9px;top:328px;width:16px;height:494px;background:#fff;"></div><svg style="left:0px;top:0px;overflow:hidden;" width="40" height="822" viewBox="0 0 40 822"><rect x="17" y="309" width="1" height="1" fill="#111"/><rect x="15" y="291" width="5" height="1" fill="#111"/><rect x="17" y="274" width="1" height="1" fill="#111"/><text x="14.16" y="260.6" font-size="12" font-family="Liberation Sans" fill="#111">1</text><rect x="17" y="238" width="1" height="1" fill="#111"/><rect x="15" y="220" width="5" height="1" fill="#111"/><rect x="17" y="203" width="1" height="1" fill="#111"/><text x="14.16" y="189.6" font-size="12" font-family="Liberation Sans" fill="#111">2</text><rect x="17" y="167" width="1" height="1" fill="#111"/><rect x="15" y="149" width="5" height="1" fill="#111"/><rect x="17" y="345" width="1" height="1" fill="#111"/><rect x="15" y="363" width="5" height="1" fill="#111"/><rect x="17" y="380" width="1" height="1" fill="#111"/><text x="14.16" y="402.6" font-size="12" font-family="Liberation Sans" fill="#111">1</text><rect x="17" y="416" width="1" height="1" fill="#111"/><rect x="15" y="434" width="5" height="1" fill="#111"/><rect x="17" y="451" width="1" height="1" fill="#111"/><text x="14.16" y="473.6" font-size="12" font-family="Liberation Sans" fill="#111">2</text><rect x="17" y="487" width="1" height="1" fill="#111"/><rect x="15" y="505" width="5" height="1" fill="#111"/><rect x="17" y="522" width="1" height="1" fill="#111"/><text x="14.16" y="544.6" font-size="12" font-family="Liberation Sans" fill="#111">3</text><rect x="17" y="558" width="1" height="1" fill="#111"/><rect x="15" y="576" width="5" height="1" fill="#111"/><rect x="17" y="593" width="1" height="1" fill="#111"/><text x="14.16" y="615.6" font-size="12" font-family="Liberation Sans" fill="#111">4</text><rect x="17" y="629" width="1" height="1" fill="#111"/><rect x="15" y="647" width="5" height="1" fill="#111"/><rect x="17" y="664" width="1" height="1" fill="#111"/><text x="14.16" y="686.6" font-size="12" font-family="Liberation Sans" fill="#111">5</text><rect x="17" y="700" width="1" height="1" fill="#111"/><rect x="15" y="718" width="5" height="1" fill="#111"/><rect x="17" y="736" width="1" height="1" fill="#111"/><text x="14.16" y="757.6" font-size="12" font-family="Liberation Sans" fill="#111">6</text><rect x="17" y="771" width="1" height="1" fill="#111"/><rect x="15" y="789" width="5" height="1" fill="#111"/><rect x="17" y="807" width="1" height="1" fill="#111"/><text x="14.16" y="828.6" font-size="12" font-family="Liberation Sans" fill="#111">7</text></svg><svg style="left:234px;top:92px;" width="11" height="28" viewBox="0 0 11 28"><rect x="2.5" y="0.5" width="7" height="5" fill="#f0f0f0" stroke="#000"/><path d="M0.5 5.5 H10.5 V8.5 L5.5 13.5 L0.5 8.5 Z" fill="#f0f0f0" stroke="#000"/><path d="M5.5 13.5 L10.5 18.5 V21.5 H0.5 V18.5 Z" fill="#f0f0f0" stroke="#000"/><rect x="0.5" y="21.5" width="10" height="6" fill="#f0f0f0" stroke="#000"/></svg><svg style="left:1365px;top:91px;" width="11" height="24" viewBox="0 0 11 24"><rect x="2.5" y="0.5" width="7" height="6" fill="#f0f0f0" stroke="#000"/><path d="M5.5 14.5 L10.5 19.5 V22.5 H0.5 V19.5 Z" fill="#f0f0f0" stroke="#000"/></svg><div style="left:4px;top:324px;width:6px;height:6px;background:#fafafa;border:1px solid #000;"></div><div style="left:239.3px;top:323.51px;font:normal normal 29.6px/39px 'Liberation Serif',sans-serif;color:#000;white-space:pre;transform:scaleX(0.9907);transform-origin:0 0;">im gay(second window)</div><div style="left:318px;top:328px;width:2px;height:33px;background:#000;"></div><div style="left:1581px;top:90px;width:17px;height:732px;background:#fff;border-left:1px solid #c8c8c8;border-right:1px solid #c8c8c8;"></div><div style="left:1581px;top:106px;width:17px;height:1px;background:#a8a8a8;"></div><svg style="left:1585px;top:96px;" width="9" height="6" viewBox="0 0 9 6"><path d="M0.8 5 L4.5 1.2 L8.2 5" fill="none" stroke="#5a5a5a" stroke-width="1.4"/></svg><div style="left:1581px;top:107px;width:17px;height:227px;background:#dcdcdc;border:1px solid #a8a8a8;border-top:none;"></div><div style="left:1586px;top:216px;width:7px;height:1.6px;background:#5a5a5a;"></div><div style="left:1586px;top:219px;width:7px;height:1.6px;background:#5a5a5a;"></div><div style="left:1586px;top:222px;width:7px;height:1.6px;background:#5a5a5a;"></div><div style="left:1581px;top:805px;width:17px;height:1px;background:#a8a8a8;"></div><svg style="left:1585px;top:811px;" width="9" height="6" viewBox="0 0 9 6"><path d="M0.8 1 L4.5 4.8 L8.2 1" fill="none" stroke="#5a5a5a" stroke-width="1.4"/></svg><div style="left:1598px;top:90px;width:2px;height:732px;background:#fff;"></div><div style="left:0px;top:823px;width:1600px;height:24px;background:#fff;"></div><div style="left:0px;top:823px;width:1600px;height:1px;background:#f0f0f0;"></div><div style="left:0px;top:824px;width:1600px;height:1px;background:#a0a0a0;"></div><div style="left:0px;top:825px;width:1600px;height:1px;background:#fff;"></div><div style="left:0px;top:826px;width:1600px;height:1px;background:#e8e8e8;"></div><div style="left:2.6px;top:828.84px;font:normal normal 12px/16px 'Liberation Sans',sans-serif;color:#000;white-space:pre;transform:scaleX(0.9226);transform-origin:0 0;">Page: 1/1</div><div style="left:129px;top:827px;width:1px;height:20px;background:#d7d7d7;"></div><div style="left:1439px;top:827px;width:1px;height:20px;background:#d7d7d7;"></div><div style="left:1469px;top:827px;width:1px;height:20px;background:#d7d7d7;"></div><div style="left:1549px;top:827px;width:1px;height:20px;background:#d7d7d7;"></div><div style="left:1445px;top:828.84px;font:normal normal 12px/16px 'Liberation Sans',sans-serif;color:#000;white-space:pre;transform:scaleX(0.8498);transform-origin:0 0;">INS</div><div style="left:1475px;top:828.84px;font:normal normal 12px/16px 'Liberation Sans',sans-serif;color:#000;white-space:pre;transform:scaleX(0.9992);transform-origin:0 0;">default</div><div style="left:1555px;top:828.84px;font:normal normal 12px/16px 'Liberation Sans',sans-serif;color:#000;white-space:pre;transform:scaleX(0.9227);transform-origin:0 0;">en-GB</div><div style="left:1599px;top:826px;width:1px;height:21px;background:#d4d8dc;"></div><div style="left:0px;top:846px;width:1600px;height:1px;background:#c4c8cc;"></div></div>
<div style="left:382px;top:109px;width:1200px;height:632px;background:#a0a0a0;border:1px solid #2b2b2b;"></div>
<svg style="left:398px;top:115.5px;" width="17" height="17" viewBox="0 0 17 17"><defs><linearGradient id="ag1" gradientUnits="userSpaceOnUse" x1="1" y1="0" x2="16" y2="0"><stop offset="0" stop-color="#1cd2ff"/><stop offset="0.35" stop-color="#6fe4ff"/><stop offset="0.55" stop-color="#7fe6ff"/><stop offset="0.75" stop-color="#34b4d8"/><stop offset="1" stop-color="#1f6c8c"/></linearGradient></defs><path d="M12 11.6 C9 13.3 5.4 14.4 1.8 14.9 C3 10 5.5 4.7 8.5 1.8 C10.8 4.2 12.8 8 14 11.2" fill="none" stroke="url(#ag1)" stroke-width="1.75" stroke-linecap="round" stroke-linejoin="round"/><path d="M13.6 10.2 C14.4 12 15 13.6 15.5 15.1" fill="none" stroke="url(#ag1)" stroke-width="1.25" stroke-linecap="round"/><path d="M4 10 C5.2 6.8 6.8 4.1 8.3 2.7" fill="none" stroke="#fff" stroke-width="0.75" stroke-linecap="round" opacity="0.8"/></svg>
<div style="left:419px;top:116.84px;font:normal normal 12px/16px 'Liberation Sans',sans-serif;color:#000;white-space:pre;letter-spacing:0.103px;">*Untitled1:2 - AbiWord</div>
<div style="left:1435px;top:110px;width:48px;height:30px;background:#a0a0a0;border:1px solid #2b2b2b;border-top:none;"></div>
<div style="left:1482px;top:110px;width:47px;height:30px;background:#a0a0a0;border:1px solid #2b2b2b;border-top:none;"></div>
<div style="left:1528px;top:110px;width:47px;height:30px;background:#c25a50;border-left:1px solid #2b2b2b;"></div>
<div style="left:1454px;top:125px;width:10px;height:3px;background:#000;"></div>
<div style="left:1501px;top:120px;width:10px;height:8px;border:2px solid #000;"></div>
<div style="left:1546px;top:113.30px;font:normal bold 15px/20px 'Liberation Sans',sans-serif;color:#000;white-space:pre;transform:scaleX(1.3);transform-origin:0 0;">x</div>
<div style="left:389px;top:139px;width:1184px;height:1px;background:#8e98a6;"></div>
<div class="w" style="left:390px;top:140px;width:1184px;height:593px;background:#f0f0f0;"><div style="left:0px;top:0px;width:1184px;height:20px;background:#f0f0f0;"></div><div style="left:8px;top:1.84px;font:normal normal 12px/16px 'Liberation Sans',sans-serif;color:#000;white-space:pre;transform:scaleX(0.8792);transform-origin:0 0;">File</div><div style="left:39px;top:1.84px;font:normal normal 12px/16px 'Liberation Sans',sans-serif;color:#000;white-space:pre;transform:scaleX(0.9672);transform-origin:0 0;">Edit</div><div style="left:73px;top:1.84px;font:normal normal 12px/16px 'Liberation Sans',sans-serif;color:#000;white-space:pre;transform:scaleX(0.9692);transform-origin:0 0;">View</div><div style="left:112px;top:1.84px;font:normal normal 12px/16px 'Liberation Sans',sans-serif;color:#000;white-space:pre;transform:scaleX(0.9663);transform-origin:0 0;">Insert</div><div style="left:155px;top:1.84px;font:normal normal 12px/16px 'Liberation Sans',sans-serif;color:#000;white-space:pre;transform:scaleX(0.9999);transform-origin:0 0;">Format</div><div style="left:207px;top:1.84px;font:normal normal 12px/16px 'Liberation Sans',sans-serif;color:#000;white-space:pre;transform:scaleX(0.9995);transform-origin:0 0;">Tools</div><div style="left:249px;top:1.84px;font:normal normal 12px/16px 'Liberation Sans',sans-serif;color:#000;white-space:pre;transform:scaleX(0.9760);transform-origin:0 0;">Table</div><div style="left:291px;top:1.84px;font:normal normal 12px/16px 'Liberation Sans',sans-serif;color:#000;white-space:pre;letter-spacing:0.039px;">Documents</div><div style="left:366px;top:1.84px;font:normal normal 12px/16px 'Liberation Sans',sans-serif;color:#000;white-space:pre;letter-spacing:0.107px;">Help</div><svg style="left:3px;top:21px;" width="3" height="30" viewBox="0 0 3 30"><rect x="1" y="0" width="2" height="2" fill="#adadad"/><rect x="0" y="1" width="1" height="1" fill="#cfcfcf"/><rect x="1" y="2" width="2" height="1" fill="#fbfbfb"/><rect x="1" y="4" width="2" height="2" fill="#adadad"/><rect x="0" y="5" width="1" height="1" fill="#cfcfcf"/><rect x="1" y="6" width="2" height="1" fill="#fbfbfb"/><rect x="1" y="8" width="2" height="2" fill="#adadad"/><rect x="0" y="9" width="1" height="1" fill="#cfcfcf"/><rect x="1" y="10" width="2" height="1" fill="#fbfbfb"/><rect x="1" y="12" width="2" height="2" fill="#adadad"/><rect x="0" y="13" width="1" height="1" fill="#cfcfcf"/><rect x="1" y="14" width="2" height="1" fill="#fbfbfb"/><rect x="1" y="16" width="2" height="2" fill="#adadad"/><rect x="0" y="17" width="1" height="1" fill="#cfcfcf"/><rect x="1" y="18" width="2" height="1" fill="#fbfbfb"/><rect x="1" y="20" width="2" height="2" fill="#adadad"/><rect x="0" y="21" width="1" height="1" fill="#cfcfcf"/><rect x="1" y="22" width="2" height="1" fill="#fbfbfb"/><rect x="1" y="24" width="2" height="2" fill="#adadad"/><rect x="0" y="25" width="1" height="1" fill="#cfcfcf"/><rect x="1" y="26" width="2" height="1" fill="#fbfbfb"/><rect x="1" y="28" width="2" height="2" fill="#adadad"/><rect x="0" y="29" width="1" height="1" fill="#cfcfcf"/><rect x="1" y="30" width="2" height="1" fill="#fbfbfb"/></svg><svg style="left:0px;top:0px;" width="1" height="1" viewBox="0 0 1 1"><defs><linearGradient id="bg" x1="0" y1="0" x2="1" y2="1"><stop offset="0" stop-color="#e2e2e2"/><stop offset="0.45" stop-color="#ffffff"/><stop offset="1" stop-color="#ececec"/></linearGradient><linearGradient id="bk" x1="0" y1="0" x2="1" y2="1"><stop offset="0" stop-color="#f4f4f4"/><stop offset="0.5" stop-color="#dcdcdc"/><stop offset="1" stop-color="#f0f0f0"/></linearGradient><linearGradient id="hb" x1="0" y1="0" x2="0.8" y2="1"><stop offset="0" stop-color="#fffdf2"/><stop offset="0.55" stop-color="#faf0d0"/><stop offset="1" stop-color="#dcc98e"/></linearGradient><linearGradient id="pg" x1="0" y1="0" x2="1" y2="1"><stop offset="0" stop-color="#ffffff"/><stop offset="1" stop-color="#d4d2cc"/></linearGradient></defs></svg><svg style="left:16px;top:24px;" width="20" height="22" viewBox="0 0 20 22"><path d="M2 0.9 H13.6 L19.1 6.4 V20 Q19.1 21.1 18 21.1 H2 Q0.9 21.1 0.9 20 V2 Q0.9 0.9 2 0.9 Z" fill="url(#pg)" stroke="#000" stroke-width="1.35" stroke-linejoin="round"/><path d="M13.4 1.2 V5.6 Q13.4 6.6 14.4 6.6 H18.8 Z" fill="#fafaf6" stroke="#2a2a2a" stroke-width="0.9" stroke-linejoin="round"/></svg><svg style="left:45px;top:26px;" width="24" height="18" viewBox="0 0 24 18"><path d="M1 14.5 V2.6 Q1 0.9 2.8 0.9 H8 Q9.3 0.9 9.8 2.2 L10.4 3.9 H17.6 Q19.6 3.9 19.6 5.8 V8" fill="#bdc29c" stroke="#000" stroke-width="1.35" stroke-linejoin="round"/><path d="M1 16.6 Q0.6 16.6 0.9 15.6 L3.2 8.3 Q3.5 7.6 4.4 7.6 H22 Q23.1 7.6 22.8 8.6 L20.3 15.8 Q20 16.6 19 16.6 Z" fill="#d3d6b8" stroke="#000" stroke-width="1.35" stroke-linejoin="round"/></svg><svg style="left:79px;top:26px;" width="18" height="18" viewBox="0 0 18 18"><rect x="0" y="0" width="18" height="18" rx="2.5" fill="#a0a0a0"/><path d="M3 3.5 H15 M3.5 6 H12" stroke="#ececec" stroke-width="1.1" fill="none"/><path d="M3.8 7.2 H6.6 L4.6 9.6 Z" fill="#ececec"/></svg><svg style="left:110px;top:24px;" width="21" height="21" viewBox="0 0 21 21"><path d="M1.6 2.8 H17 Q17.8 2.8 17.8 3.6 V18.4 Q17.8 19.2 17 19.2 H3.2 L0.8 16.8 V3.6 Q0.8 2.8 1.6 2.8 Z" fill="#5a90cc" stroke="#000" stroke-width="1.35" stroke-linejoin="round"/><rect x="3.2" y="3.8" width="11.6" height="7.6" fill="#f6f6f6"/><path d="M4.5 6.2 H12 M4.5 8.6 H10.5" stroke="#aaa" stroke-width="0.9"/><rect x="4.8" y="13.6" width="9" height="5" fill="#d4d4d4"/><rect x="6.6" y="14.4" width="1.8" height="3.8" fill="#23498a"/><path d="M12 13.6 V18.6" stroke="#fff" stroke-width="0.8"/><path d="M17.6 0.8 L19.8 3 L10.6 12.2 L7.6 13.2 L8.6 10.2 Z" fill="#f2ae22" stroke="#0c0c0c" stroke-width="1" stroke-linejoin="round"/><path d="M7.6 13.2 L8.3 11 L9.9 12.5 Z" fill="#222"/></svg><div style="left:135px;top:20px;width:1px;height:30px;background:#a0a0a0;"></div><svg style="left:147px;top:24px;" width="23" height="23" viewBox="0 0 23 23"><path d="M5.6 11 V1.8 Q5.6 0.8 6.6 0.8 H16.4 Q17.4 0.8 17.4 1.8 V11 Z" fill="#fff" stroke="#000" stroke-width="1.35"/><path d="M7.6 3.2 H10 M11.2 3.2 H12 M7.6 5.4 H10.6 M11.6 5.4 H15.4 M7.6 7.6 H11.4 M12.6 7.6 H14.6 M7.6 9.8 H15.4" stroke="#8a8a8a" stroke-width="1"/><path d="M0.8 19.4 V13.4 Q0.8 12.6 1.4 12 L3.6 9.8 H19.4 L21.6 12 Q22.2 12.6 22.2 13.4 V18.8 Q22.2 19.6 21.4 19.6 H1.6 Q0.8 19.6 0.8 18.8 Z" fill="#d9d9d9" stroke="#000" stroke-width="1.35" stroke-linejoin="round"/><rect x="1.6" y="15.6" width="19.8" height="3.4" fill="#8e8e8a"/><rect x="3.2" y="12.6" width="16.6" height="2.8" fill="#fbfbfb" stroke="#777" stroke-width="0.5"/><path d="M4.5 14 H18.5" stroke="#999" stroke-width="0.8" stroke-dasharray="1.2 0.8"/><path d="M2.2 19.8 H20.8 V20.8 Q20.8 21.6 20 21.6 H3 Q2.2 21.6 2.2 20.8 Z" fill="#6e6e6a" stroke="#0c0c0c" stroke-width="1.1"/></svg><svg style="left:178px;top:26px;" width="23" height="20" viewBox="0 0 23 20"><g fill="none" stroke="#a0a0a0" stroke-width="1.7" stroke-linejoin="round"><path d="M0.9 7 V2.6 Q0.9 1 2.5 1 H3.3 Q4.9 1 4.9 2.6 V7 M0.9 4.4 H4.9"/><path d="M7 1 V6.6 H9.6 Q11 6.6 11 5.2 Q11 3.8 9.6 3.8 H7 M9.4 3.8 Q10.7 3.8 10.7 2.4 Q10.7 1 9.4 1 H7"/><path d="M16.8 2.2 Q16.4 1 15 1 H14.6 Q13 1 13 2.8 V4.8 Q13 6.6 14.6 6.6 H15 Q16.4 6.6 16.8 5.4"/></g><path d="M7.6 9.6 L10.6 8 L14.2 13.2 L20 4.4 L22.3 6.2 L14.8 19.4 L13.4 19.4 Z" fill="#a0a0a0"/></svg><div style="left:205px;top:20px;width:1px;height:30px;background:#a0a0a0;"></div><svg style="left:220px;top:25px;" width="16" height="21" viewBox="0 0 16 21"><path d="M2.4 0 L5.2 3.4 L12.8 13.6 L10 15.8 L1.6 4.4 Z" fill="#a0a0a0"/><path d="M12.6 0 L9.8 3.4 L2.2 13.6 L5 15.8 L13.4 4.4 Z" fill="#a0a0a0"/><circle cx="3.4" cy="16.9" r="2.3" fill="#f0f0f0" stroke="#a0a0a0" stroke-width="1.9"/><circle cx="11.6" cy="16.9" r="2.3" fill="#f0f0f0" stroke="#a0a0a0" stroke-width="1.9"/></svg><svg style="left:248px;top:24px;" width="23" height="21" viewBox="0 0 23 21"><rect x="0" y="0" width="14" height="14.8" rx="1" fill="#a0a0a0"/><rect x="8.6" y="5.6" width="13" height="14" rx="1.2" fill="#f0f0f0" stroke="#a0a0a0" stroke-width="1.2"/><path d="M10.5 8.5 H19.5 M10.5 10.5 H19.5 M10.5 12.5 H19.5 M10.5 14.5 H19.5 M10.5 16.5 H19.5" stroke="#a8a8a8" stroke-width="1" stroke-dasharray="2.3 1"/></svg><svg style="left:278px;top:23px;" width="23" height="24" viewBox="0 0 23 24"><rect x="0.8" y="1.8" width="16.6" height="19.6" rx="1.5" fill="#d9cf9f" stroke="#000" stroke-width="1.5"/><path d="M2.5 6 H16 M2.5 8 H16 M2.5 10 H16 M2.5 12 H16 M2.5 14 H16 M2.5 16 H16 M2.5 18 H16 M2.5 20 H16" stroke="#a89e6e" stroke-width="0.8"/><path d="M4.6 6 L7 2.6 Q8 0.8 9.6 0.8 Q11.2 0.8 12.2 2.6 L14.4 6 Z" fill="#e8e8e8" stroke="#555" stroke-width="0.8"/><rect x="8.6" y="2.2" width="2" height="1.6" fill="#666"/><rect x="8.2" y="8.6" width="13.2" height="13.6" rx="1.2" fill="#fff" stroke="#000" stroke-width="1.5"/><path d="M10 11.5 H11.6 M18.2 11.5 H19.8 M10 13.5 H11.6 M18.2 13.5 H19.8 M10 19.5 H11.6 M18.2 19.5 H19.8" stroke="#c4c4c4" stroke-width="0.8"/><path d="M12.6 11.2 H17 V15.4 H19.6 L14.8 20.8 L10 15.4 H12.6 Z" fill="#8fc08f"/><path d="M12.6 15.4 V11.2 H17 V15.4" fill="none" stroke="#1a2a1a" stroke-width="1"/><path d="M10 15.4 L14.8 20.8 L19.6 15.4" fill="none" stroke="#5c8c5c" stroke-width="0.9"/></svg><svg style="left:311px;top:23px;" width="18" height="22" viewBox="0 0 18 22"><path d="M14.6 2.4 L11.2 5.8" stroke="#a0a0a0" stroke-width="5.4" stroke-linecap="round"/><path d="M10.6 6.4 L3.4 14.4" stroke="#a0a0a0" stroke-width="3.2" fill="none" stroke-linecap="round"/><path d="M3.2 14.6 L2.4 17.4" stroke="#a0a0a0" stroke-width="1.6"/><circle cx="2.4" cy="19.2" r="2.1" fill="#a0a0a0"/></svg><div style="left:337px;top:20px;width:1px;height:30px;background:#a0a0a0;"></div><svg style="left:352px;top:27px;" width="16" height="19" viewBox="0 0 16 19"><defs><linearGradient id="ug" x1="0" y1="0" x2="0" y2="1"><stop offset="0" stop-color="#ffe070"/><stop offset="0.5" stop-color="#f2b430"/><stop offset="1" stop-color="#c88410"/></linearGradient></defs><path d="M7 0.8 L0.8 6.8 L7.2 12 V8.8 C9.6 8.8 10.8 10.6 10 13.2 C9.5 14.8 8.4 16.2 7.2 17 L9.6 18.4 C13.2 16.6 15.4 12.6 14.4 8.8 C13.4 5.2 10.4 3.8 7 3.8 Z" fill="url(#ug)" stroke="#0c0c0c" stroke-width="1.1" stroke-linejoin="round"/></svg><svg style="left:383px;top:27px;" width="16" height="19" viewBox="0 0 16 19"><path d="M9 0.4 L15.6 6.8 L8.8 12.4 V8.8 C6.4 8.8 5.2 10.6 6 13.2 C6.5 14.8 7.6 16.2 8.8 17 L6.4 18.8 C2.6 16.8 0.4 12.6 1.4 8.6 C2.4 5 5.4 3.6 9 3.6 Z" fill="#a0a0a0"/></svg><div style="left:407px;top:20px;width:1px;height:30px;background:#a0a0a0;"></div><div style="left:415px;top:20px;width:31px;height:30px;background:#e5f1fb;border:1px solid #2aa0da;"></div><svg style="left:419px;top:23px;" width="22" height="21" viewBox="0 0 22 21"><rect x="0.6" y="0.6" width="20.8" height="19.8" rx="2.2" fill="url(#bg)" stroke="#0a0a0a" stroke-width="1.15"/><rect x="4" y="4" width="14" height="1.15" fill="#000"/><rect x="4" y="6" width="14" height="1.15" fill="#000"/><rect x="4" y="8" width="14" height="1.15" fill="#000"/><rect x="4" y="10" width="14" height="1.15" fill="#000"/><rect x="4" y="12" width="14" height="1.15" fill="#000"/><rect x="4" y="14" width="14" height="1.15" fill="#000"/><rect x="4" y="16" width="14" height="1.15" fill="#000"/></svg><svg style="left:449px;top:23px;" width="22" height="21" viewBox="0 0 22 21"><rect x="0.6" y="0.6" width="20.8" height="19.8" rx="2.2" fill="url(#bg)" stroke="#0a0a0a" stroke-width="1.15"/><rect x="4" y="4" width="6" height="1.15" fill="#000"/><rect x="4" y="6" width="6" height="1.15" fill="#000"/><rect x="4" y="8" width="6" height="1.15" fill="#000"/><rect x="4" y="10" width="6" height="1.15" fill="#000"/><rect x="4" y="12" width="6" height="1.15" fill="#000"/><rect x="4" y="14" width="6" height="1.15" fill="#000"/><rect x="4" y="16" width="6" height="1.15" fill="#000"/><rect x="12" y="4" width="6" height="1.15" fill="#000"/><rect x="12" y="6" width="6" height="1.15" fill="#000"/><rect x="12" y="8" width="6" height="1.15" fill="#000"/><rect x="12" y="10" width="6" height="1.15" fill="#000"/><rect x="12" y="12" width="6" height="1.15" fill="#000"/><rect x="12" y="14" width="6" height="1.15" fill="#000"/><rect x="12" y="16" width="6" height="1.15" fill="#000"/></svg><svg style="left:480px;top:23px;" width="22" height="21" viewBox="0 0 22 21"><rect x="0.6" y="0.6" width="20.8" height="19.8" rx="2.2" fill="url(#bg)" stroke="#0a0a0a" stroke-width="1.15"/><rect x="4" y="4" width="4" height="1.15" fill="#000"/><rect x="4" y="6" width="4" height="1.15" fill="#000"/><rect x="4" y="8" width="4" height="1.15" fill="#000"/><rect x="4" y="10" width="4" height="1.15" fill="#000"/><rect x="4" y="12" width="4" height="1.15" fill="#000"/><rect x="4" y="14" width="4" height="1.15" fill="#000"/><rect x="4" y="16" width="4" height="1.15" fill="#000"/><rect x="9" y="4" width="4.4" height="1.15" fill="#000"/><rect x="9" y="6" width="4.4" height="1.15" fill="#000"/><rect x="9" y="8" width="4.4" height="1.15" fill="#000"/><rect x="9" y="10" width="4.4" height="1.15" fill="#000"/><rect x="9" y="12" width="4.4" height="1.15" fill="#000"/><rect x="9" y="14" width="4.4" height="1.15" fill="#000"/><rect x="9" y="16" width="4.4" height="1.15" fill="#000"/><rect x="14.4" y="4" width="3.9999999999999982" height="1.15" fill="#000"/><rect x="14.4" y="6" width="3.9999999999999982" height="1.15" fill="#000"/><rect x="14.4" y="8" width="3.9999999999999982" height="1.15" fill="#000"/><rect x="14.4" y="10" width="3.9999999999999982" height="1.15" fill="#000"/><rect x="14.4" y="12" width="3.9999999999999982" height="1.15" fill="#000"/><rect x="14.4" y="14" width="3.9999999999999982" height="1.15" fill="#000"/><rect x="14.4" y="16" width="3.9999999999999982" height="1.15" fill="#000"/></svg><div style="left:508px;top:20px;width:1px;height:30px;background:#a0a0a0;"></div><svg style="left:521px;top:25px;" width="20" height="19" viewBox="0 0 20 19"><circle cx="13.5" cy="5.5" r="5" fill="#f2d66d" stroke="#7a6a2a" stroke-width="0.9"/><rect x="0.7" y="6" width="9.5" height="9.5" fill="#e0421e" stroke="#6a1a0a" stroke-width="1"/><path d="M13 7.5 L18 18 H8 Z" fill="#6d8db5" stroke="#2a3a55" stroke-width="0.9"/></svg><svg style="left:553px;top:26px;" width="18" height="18" viewBox="0 0 18 18"><rect x="0.5" y="0.5" width="17" height="17" fill="url(#bg)" stroke="#1a1a1a"/><path d="M9.5 4.5 V12.5 M11.5 4.5 V12.5 M7.6 4.5 H13.2 M8.6 12.5 H12.6" fill="none" stroke="#000" stroke-width="0.95"/><path d="M9.5 4.5 Q6.4 4.5 6.4 6.6 Q6.4 8.7 9.5 8.7" fill="none" stroke="#000" stroke-width="0.95"/></svg><div style="left:578px;top:24px;width:90px;height:21px;background:#fff;border:1px solid #7a7a7a;"></div><div style="left:581.5px;top:25.67px;font:normal normal 12.5px/17px 'Liberation Sans',sans-serif;color:#000;white-space:pre;transform:scaleX(0.8512);transform-origin:0 0;">Page Width</div><svg style="left:655px;top:31px;" width="8" height="7" viewBox="0 0 8 7"><path d="M0.6 0.9 L4 4.6 L7.4 0.9" fill="none" stroke="#404040" stroke-width="1.9"/></svg><svg style="left:672px;top:26px;" width="23" height="19" viewBox="0 0 23 19"><path d="M6 14.5 C2.5 13.5 0.8 11 0.8 8 C0.8 3.5 5.5 0.8 11.5 0.8 C17.5 0.8 22 3.5 22 8 C22 12.5 17.5 15 11.5 15 C10.8 15 10 15 9.3 14.8 C7.5 16.8 5 17.8 2.5 17.8 C4.5 17 5.8 15.8 6 14.5 Z" fill="url(#hb)" stroke="#111" stroke-width="1.2"/><text x="8" y="12.5" font-family="Liberation Sans" font-weight="bold" font-size="12" fill="#000">?</text></svg><div style="left:0px;top:50px;width:1184px;height:1px;background:#a0a0a0;"></div><div style="left:0px;top:51px;width:1184px;height:1px;background:#fdfdfd;"></div><svg style="left:3px;top:53px;" width="3" height="32" viewBox="0 0 3 32"><rect x="1" y="0" width="2" height="2" fill="#adadad"/><rect x="0" y="1" width="1" height="1" fill="#cfcfcf"/><rect x="1" y="2" width="2" height="1" fill="#fbfbfb"/><rect x="1" y="4" width="2" height="2" fill="#adadad"/><rect x="0" y="5" width="1" height="1" fill="#cfcfcf"/><rect x="1" y="6" width="2" height="1" fill="#fbfbfb"/><rect x="1" y="8" width="2" height="2" fill="#adadad"/><rect x="0" y="9" width="1" height="1" fill="#cfcfcf"/><rect x="1" y="10" width="2" height="1" fill="#fbfbfb"/><rect x="1" y="12" width="2" height="2" fill="#adadad"/><rect x="0" y="13" width="1" height="1" fill="#cfcfcf"/><rect x="1" y="14" width="2" height="1" fill="#fbfbfb"/><rect x="1" y="16" width="2" height="2" fill="#adadad"/><rect x="0" y="17" width="1" height="1" fill="#cfcfcf"/><rect x="1" y="18" width="2" height="1" fill="#fbfbfb"/><rect x="1" y="20" width="2" height="2" fill="#adadad"/><rect x="0" y="21" width="1" height="1" fill="#cfcfcf"/><rect x="1" y="22" width="2" height="1" fill="#fbfbfb"/><rect x="1" y="24" width="2" height="2" fill="#adadad"/><rect x="0" y="25" width="1" height="1" fill="#cfcfcf"/><rect x="1" y="26" width="2" height="1" fill="#fbfbfb"/><rect x="1" y="28" width="2" height="2" fill="#adadad"/><rect x="0" y="29" width="1" height="1" fill="#cfcfcf"/><rect x="1" y="30" width="2" height="1" fill="#fbfbfb"/></svg><div style="left:11px;top:56px;width:160px;height:21px;background:#fff;border:1px solid #7a7a7a;"></div><div style="left:14.5px;top:57.67px;font:normal normal 12.5px/17px 'Liberation Sans',sans-serif;color:#000;white-space:pre;transform:scaleX(0.7944);transform-origin:0 0;">Normal</div><svg style="left:158px;top:63px;" width="8" height="7" viewBox="0 0 8 7"><path d="M0.6 0.9 L4 4.6 L7.4 0.9" fill="none" stroke="#404040" stroke-width="1.9"/></svg><div style="left:171px;top:56px;width:160px;height:22px;background:#fff;border:1px solid #7a7a7a;"></div><div style="left:174.5px;top:57.67px;font:normal normal 12.5px/17px 'Liberation Sans',sans-serif;color:#000;white-space:pre;transform:scaleX(0.8364);transform-origin:0 0;">Times New Roman</div><svg style="left:318px;top:64px;" width="8" height="7" viewBox="0 0 8 7"><path d="M0.6 0.9 L4 4.6 L7.4 0.9" fill="none" stroke="#404040" stroke-width="1.9"/></svg><div style="left:331px;top:56px;width:45px;height:21px;background:#fff;border:1px solid #7a7a7a;"></div><div style="left:334.5px;top:57.67px;font:normal normal 12.5px/17px 'Liberation Sans',sans-serif;color:#000;white-space:pre;transform:scaleX(0.8631);transform-origin:0 0;">12</div><svg style="left:363px;top:63px;" width="8" height="7" viewBox="0 0 8 7"><path d="M0.6 0.9 L4 4.6 L7.4 0.9" fill="none" stroke="#404040" stroke-width="1.9"/></svg><div style="left:376px;top:52px;width:1px;height:30px;background:#a0a0a0;"></div><svg style="left:387px;top:55px;" width="22" height="21" viewBox="0 0 22 21"><rect x="0.6" y="0.6" width="20.8" height="19.8" rx="2.2" fill="url(#bg)" stroke="#0a0a0a" stroke-width="1.15"/><path d="M4.2 16.7 L9 3.7 H13.2 L18 16.7 H13.9 L13.2 14.3 H9 L8.3 16.7 Z M9.9 11.5 H12.3 L11.1 7.3 Z" fill="#000" fill-rule="evenodd"/></svg><svg style="left:418px;top:55px;" width="22" height="21" viewBox="0 0 22 21"><rect x="0.6" y="0.6" width="20.8" height="19.8" rx="2.2" fill="url(#bg)" stroke="#0a0a0a" stroke-width="1.15"/><path d="M5.8 16.7 L13 3.9 H13.7 L15.4 16.7 M8.5 12.2 H14.7" fill="none" stroke="#000" stroke-width="1.45"/></svg><svg style="left:449px;top:55px;" width="22" height="21" viewBox="0 0 22 21"><rect x="0.6" y="0.6" width="20.8" height="19.8" rx="2.2" fill="url(#bg)" stroke="#0a0a0a" stroke-width="1.15"/><path d="M5.6 15.9 L10.8 3.4 H11.6 L16.8 15.9 M7.5 11.6 H14.9" fill="none" stroke="#000" stroke-width="1.45"/><rect x="5" y="17.2" width="12.4" height="1.1" fill="#000"/></svg><div style="left:477px;top:52px;width:1px;height:30px;background:#a0a0a0;"></div><div style="left:485px;top:52px;width:31px;height:30px;background:#e5f1fb;border:1px solid #2aa0da;"></div><svg style="left:489px;top:55px;" width="22" height="21" viewBox="0 0 22 21"><rect x="0.6" y="0.6" width="20.8" height="19.8" rx="2.2" fill="url(#bg)" stroke="#0a0a0a" stroke-width="1.15"/><rect x="3" y="3" width="0" height="1" fill="#8c8c8c"/><rect x="3" y="5" width="0" height="1" fill="#8c8c8c"/><rect x="3" y="7" width="0" height="1" fill="#8c8c8c"/><rect x="3" y="9" width="0" height="1" fill="#8c8c8c"/><rect x="3" y="11" width="0" height="1" fill="#8c8c8c"/><rect x="3" y="13" width="0" height="1" fill="#8c8c8c"/><rect x="3" y="15" width="0" height="1" fill="#8c8c8c"/><rect x="3" y="17" width="0" height="1" fill="#8c8c8c"/><rect x="3" y="3" width="11" height="1" fill="#8c8c8c"/><rect x="3" y="5" width="15" height="1" fill="#8c8c8c"/><rect x="3" y="7" width="9" height="1" fill="#8c8c8c"/><rect x="3" y="9" width="14" height="1" fill="#8c8c8c"/><rect x="3" y="11" width="11" height="1" fill="#8c8c8c"/><rect x="3" y="13" width="7" height="1" fill="#8c8c8c"/><rect x="3" y="15" width="12" height="1" fill="#8c8c8c"/><rect x="3" y="17" width="5" height="1" fill="#8c8c8c"/></svg><svg style="left:519px;top:55px;" width="22" height="21" viewBox="0 0 22 21"><rect x="0.6" y="0.6" width="20.8" height="19.8" rx="2.2" fill="url(#bg)" stroke="#0a0a0a" stroke-width="1.15"/><rect x="4.5" y="3" width="13" height="1" fill="#8c8c8c"/><rect x="6.5" y="5" width="9" height="1" fill="#8c8c8c"/><rect x="3.5" y="7" width="15" height="1" fill="#8c8c8c"/><rect x="5.5" y="9" width="11" height="1" fill="#8c8c8c"/><rect x="7.5" y="11" width="7" height="1" fill="#8c8c8c"/><rect x="4.5" y="13" width="13" height="1" fill="#8c8c8c"/><rect x="6.5" y="15" width="9" height="1" fill="#8c8c8c"/><rect x="3.5" y="17" width="15" height="1" fill="#8c8c8c"/></svg><svg style="left:550px;top:55px;" width="22" height="21" viewBox="0 0 22 21"><rect x="0.6" y="0.6" width="20.8" height="19.8" rx="2.2" fill="url(#bg)" stroke="#0a0a0a" stroke-width="1.15"/><rect x="8" y="3" width="11" height="1" fill="#8c8c8c"/><rect x="4" y="5" width="15" height="1" fill="#8c8c8c"/><rect x="10" y="7" width="9" height="1" fill="#8c8c8c"/><rect x="5" y="9" width="14" height="1" fill="#8c8c8c"/><rect x="8" y="11" width="11" height="1" fill="#8c8c8c"/><rect x="12" y="13" width="7" height="1" fill="#8c8c8c"/><rect x="7" y="15" width="12" height="1" fill="#8c8c8c"/><rect x="8" y="17" width="11" height="1" fill="#8c8c8c"/></svg><svg style="left:581px;top:55px;" width="22" height="21" viewBox="0 0 22 21"><rect x="0.6" y="0.6" width="20.8" height="19.8" rx="2.2" fill="url(#bg)" stroke="#0a0a0a" stroke-width="1.15"/><rect x="3" y="3" width="16" height="1" fill="#8c8c8c"/><rect x="3" y="5" width="16" height="1" fill="#8c8c8c"/><rect x="3" y="7" width="16" height="1" fill="#8c8c8c"/><rect x="3" y="9" width="16" height="1" fill="#8c8c8c"/><rect x="3" y="11" width="16" height="1" fill="#8c8c8c"/><rect x="3" y="13" width="16" height="1" fill="#8c8c8c"/><rect x="3" y="15" width="16" height="1" fill="#8c8c8c"/><rect x="3" y="17" width="16" height="1" fill="#8c8c8c"/></svg><div style="left:609px;top:52px;width:1px;height:30px;background:#a0a0a0;"></div><svg style="left:620px;top:55px;" width="22" height="21" viewBox="0 0 22 21"><rect x="0.6" y="0.6" width="20.8" height="19.8" rx="2.2" fill="url(#bg)" stroke="#0a0a0a" stroke-width="1.15"/><path d="M3.5 4.8 L5.3 3.3 V8.4" fill="none" stroke="#6a6a6a" stroke-width="1.2"/><path d="M3.4 13.8 Q3.4 12.4 4.9 12.4 Q6.3 12.4 6.3 13.7 Q6.3 14.8 3.5 17.2 H6.6" fill="none" stroke="#6a6a6a" stroke-width="1.1"/><rect x="9" y="4" width="9" height="1" fill="#6a6a6a"/><rect x="9" y="6" width="9" height="1" fill="#6a6a6a"/><rect x="9" y="8" width="6" height="1" fill="#6a6a6a"/><rect x="9" y="13" width="9" height="1" fill="#6a6a6a"/><rect x="9" y="15" width="8" height="1" fill="#6a6a6a"/></svg><svg style="left:651px;top:55px;" width="22" height="21" viewBox="0 0 22 21"><rect x="0.6" y="0.6" width="20.8" height="19.8" rx="2.2" fill="url(#bg)" stroke="#0a0a0a" stroke-width="1.15"/><circle cx="5.5" cy="5.5" r="1.7" fill="#6a6a6a"/><path d="M5.5 12.8 L7.2 14.5 L5.5 16.2 L3.8 14.5 Z" fill="#6a6a6a"/><rect x="9" y="4" width="9" height="1" fill="#6a6a6a"/><rect x="9" y="6" width="9" height="1" fill="#6a6a6a"/><rect x="9" y="8" width="6" height="1" fill="#6a6a6a"/><rect x="9" y="13" width="9" height="1" fill="#6a6a6a"/><rect x="9" y="15" width="8" height="1" fill="#6a6a6a"/></svg><svg style="left:682px;top:55px;" width="22" height="21" viewBox="0 0 22 21"><rect x="0" y="0" width="22" height="21" rx="2.5" fill="#a0a0a0"/><path d="M2.5 18 L19.5 3" stroke="#ececec" stroke-width="1" stroke-dasharray="2.4 1.6"/><path d="M19.5 15.5 V19 H16 Z" fill="#e4e4e4"/><rect x="1.5" y="2" width="1" height="1" fill="#ddd"/><rect x="19" y="10.5" width="1" height="1" fill="#ddd"/><rect x="10" y="18" width="1" height="1" fill="#ddd"/><rect x="2" y="15.5" width="1" height="1" fill="#ddd"/></svg><svg style="left:713px;top:55px;" width="22" height="21" viewBox="0 0 22 21"><rect x="0.6" y="0.6" width="20.8" height="19.8" rx="2.2" fill="url(#bg)" stroke="#0a0a0a" stroke-width="1.15"/><path d="M3 4.5 H19 M3 16.5 H19" stroke="#b4b4b4" stroke-width="1"/><rect x="10.5" y="2" width="1" height="1" fill="#888"/><rect x="10.5" y="18" width="1" height="1" fill="#888"/><path d="M2 10.5 H6" stroke="#000" stroke-width="1.5"/><path d="M5 7.8 L8.2 10.5 L5 13.2 Z" fill="#000"/><rect x="9.5" y="7" width="9.5" height="1" fill="#6a6a6a"/><rect x="9.5" y="9" width="9.5" height="1" fill="#6a6a6a"/><rect x="9.5" y="11" width="9.5" height="1" fill="#6a6a6a"/><rect x="9.5" y="13" width="4.5" height="1" fill="#6a6a6a"/></svg><div style="left:741px;top:52px;width:1px;height:30px;background:#a0a0a0;"></div><svg style="left:753px;top:55px;" width="23" height="23" viewBox="0 0 23 23"><path d="M8.6 3.6 L16 11.4 L8.4 20 L0.8 12 Z" fill="url(#bk)" stroke="#222" stroke-width="1.1" stroke-linejoin="round"/><circle cx="8.2" cy="2.6" r="1.7" fill="#fff" stroke="#111" stroke-width="1"/><path d="M8.8 4.2 L9.8 10" stroke="#111" stroke-width="1"/><circle cx="10" cy="11" r="1.2" fill="#fff" stroke="#111" stroke-width="0.8"/><path d="M13 7.4 L18.6 8.4 Q20.6 9 20.6 11 V21 L19.4 22.6 L18 21 V13 Q17 10.6 14.6 10 Z" fill="#d8452a" stroke="#7a1a0a" stroke-width="0.8"/></svg><svg style="left:784px;top:65px;" width="8" height="5" viewBox="0 0 8 5"><path d="M0 0 H8 L4 4.5 Z" fill="#222"/></svg><div style="left:803px;top:51.91px;font:normal bold 21px/28px 'Liberation Serif',sans-serif;color:#1a1200;white-space:pre;">T</div><svg style="left:830px;top:65px;" width="8" height="5" viewBox="0 0 8 5"><path d="M0 0 H8 L4 4.5 Z" fill="#222"/></svg><div style="left:0px;top:88px;width:1184px;height:1px;background:#a0a0a0;"></div><div style="left:0px;top:89px;width:1184px;height:1px;background:#696969;"></div><div style="left:0px;top:88px;width:1px;height:481px;background:#a0a0a0;"></div><div style="left:1px;top:89px;width:1px;height:480px;background:#696969;"></div><div style="left:9px;top:98px;width:17px;height:17px;background:#f0f0f0;border:1px solid #a0a0a0;box-shadow:inset 0 0 0 1px #fff;"></div><svg style="left:15px;top:104px;" width="6" height="6" viewBox="0 0 6 6"><path d="M1 0 V5 H6" fill="none" stroke="#000" stroke-width="2"/></svg><div style="left:34px;top:122px;width:1131px;height:446px;background:#808080;"></div><div style="left:59px;top:147px;width:1079px;height:421px;background:#fff;border-left:1px solid #000;border-top:1px solid #000;"></div><div style="left:1138px;top:150px;width:3px;height:418px;background:#000;"></div><div style="left:59px;top:98px;width:130px;height:16px;background:#a0a0a0;"></div><div style="left:189px;top:98px;width:819px;height:16px;background:#fff;"></div><div style="left:1008px;top:98px;width:130px;height:16px;background:#a0a0a0;"></div><svg style="left:0px;top:0px;" width="1165" height="128" viewBox="0 0 1165 128"><rect x="176" y="105" width="1" height="2" fill="#111"/><rect x="163" y="103" width="1" height="6" fill="#111"/><rect x="150" y="105" width="1" height="2" fill="#111"/><text x="135.16" y="110.3" font-size="12" font-family="Liberation Sans" fill="#111">1</text><rect x="125" y="105" width="1" height="2" fill="#111"/><rect x="112" y="103" width="1" height="6" fill="#111"/><rect x="99" y="105" width="1" height="2" fill="#111"/><text x="83.16" y="110.3" font-size="12" font-family="Liberation Sans" fill="#111">2</text><rect x="73" y="105" width="1" height="2" fill="#111"/><rect x="60" y="103" width="1" height="6" fill="#111"/><rect x="202" y="105" width="1" height="2" fill="#111"/><rect x="215" y="103" width="1" height="6" fill="#111"/><rect x="228" y="105" width="1" height="2" fill="#111"/><text x="237.16" y="110.3" font-size="12" font-family="Liberation Sans" fill="#111">1</text><rect x="253" y="105" width="1" height="2" fill="#111"/><rect x="266" y="103" width="1" height="6" fill="#111"/><rect x="279" y="105" width="1" height="2" fill="#111"/><text x="289.16" y="110.3" font-size="12" font-family="Liberation Sans" fill="#111">2</text><rect x="305" y="105" width="1" height="2" fill="#111"/><rect x="318" y="103" width="1" height="6" fill="#111"/><rect x="330" y="105" width="1" height="2" fill="#111"/><text x="340.16" y="110.3" font-size="12" font-family="Liberation Sans" fill="#111">3</text><rect x="356" y="105" width="1" height="2" fill="#111"/><rect x="369" y="103" width="1" height="6" fill="#111"/><rect x="382" y="105" width="1" height="2" fill="#111"/><text x="392.16" y="110.3" font-size="12" font-family="Liberation Sans" fill="#111">4</text><rect x="407" y="105" width="1" height="2" fill="#111"/><rect x="420" y="103" width="1" height="6" fill="#111"/><rect x="433" y="105" width="1" height="2" fill="#111"/><text x="443.16" y="110.3" font-size="12" font-family="Liberation Sans" fill="#111">5</text><rect x="459" y="105" width="1" height="2" fill="#111"/><rect x="472" y="103" width="1" height="6" fill="#111"/><rect x="485" y="105" width="1" height="2" fill="#111"/><text x="494.16" y="110.3" font-size="12" font-family="Liberation Sans" fill="#111">6</text><rect x="510" y="105" width="1" height="2" fill="#111"/><rect x="523" y="103" width="1" height="6" fill="#111"/><rect x="536" y="105" width="1" height="2" fill="#111"/><text x="546.16" y="110.3" font-size="12" font-family="Liberation Sans" fill="#111">7</text><rect x="562" y="105" width="1" height="2" fill="#111"/><rect x="574" y="103" width="1" height="6" fill="#111"/><rect x="587" y="105" width="1" height="2" fill="#111"/><text x="597.16" y="110.3" font-size="12" font-family="Liberation Sans" fill="#111">8</text><rect x="613" y="105" width="1" height="2" fill="#111"/><rect x="626" y="103" width="1" height="6" fill="#111"/><rect x="639" y="105" width="1" height="2" fill="#111"/><text x="649.16" y="110.3" font-size="12" font-family="Liberation Sans" fill="#111">9</text><rect x="664" y="105" width="1" height="2" fill="#111"/><rect x="677" y="103" width="1" height="6" fill="#111"/><rect x="690" y="105" width="1" height="2" fill="#111"/><text x="696.83" y="110.3" font-size="12" font-family="Liberation Sans" fill="#111">10</text><rect x="716" y="105" width="1" height="2" fill="#111"/><rect x="729" y="103" width="1" height="6" fill="#111"/><rect x="742" y="105" width="1" height="2" fill="#111"/><text x="748.27" y="110.3" font-size="12" font-family="Liberation Sans" fill="#111">11</text><rect x="767" y="105" width="1" height="2" fill="#111"/><rect x="780" y="103" width="1" height="6" fill="#111"/><rect x="793" y="105" width="1" height="2" fill="#111"/><text x="799.83" y="110.3" font-size="12" font-family="Liberation Sans" fill="#111">12</text><rect x="819" y="105" width="1" height="2" fill="#111"/><rect x="832" y="103" width="1" height="6" fill="#111"/><rect x="844" y="105" width="1" height="2" fill="#111"/><text x="850.83" y="110.3" font-size="12" font-family="Liberation Sans" fill="#111">13</text><rect x="870" y="105" width="1" height="2" fill="#111"/><rect x="883" y="103" width="1" height="6" fill="#111"/><rect x="896" y="105" width="1" height="2" fill="#111"/><text x="902.83" y="110.3" font-size="12" font-family="Liberation Sans" fill="#111">14</text><rect x="921" y="105" width="1" height="2" fill="#111"/><rect x="934" y="103" width="1" height="6" fill="#111"/><rect x="947" y="105" width="1" height="2" fill="#111"/><text x="953.83" y="110.3" font-size="12" font-family="Liberation Sans" fill="#111">15</text><rect x="973" y="105" width="1" height="2" fill="#111"/><rect x="986" y="103" width="1" height="6" fill="#111"/><rect x="999" y="105" width="1" height="2" fill="#111"/><text x="1004.83" y="110.3" font-size="12" font-family="Liberation Sans" fill="#111">16</text><rect x="1024" y="105" width="1" height="2" fill="#111"/><rect x="1037" y="103" width="1" height="6" fill="#111"/><rect x="1050" y="105" width="1" height="2" fill="#111"/><text x="1056.83" y="110.3" font-size="12" font-family="Liberation Sans" fill="#111">17</text><rect x="1076" y="105" width="1" height="2" fill="#111"/><rect x="1088" y="103" width="1" height="6" fill="#111"/><rect x="1101" y="105" width="1" height="2" fill="#111"/><text x="1107.83" y="110.3" font-size="12" font-family="Liberation Sans" fill="#111">18</text><rect x="1127" y="105" width="1" height="2" fill="#111"/><rect x="254" y="116" width="1" height="3" fill="#a0a0a0"/><rect x="320" y="116" width="1" height="3" fill="#a0a0a0"/><rect x="385" y="116" width="1" height="3" fill="#a0a0a0"/><rect x="450" y="116" width="1" height="3" fill="#a0a0a0"/><rect x="515" y="116" width="1" height="3" fill="#a0a0a0"/><rect x="581" y="116" width="1" height="3" fill="#a0a0a0"/><rect x="646" y="116" width="1" height="3" fill="#a0a0a0"/><rect x="711" y="116" width="1" height="3" fill="#a0a0a0"/><rect x="777" y="116" width="1" height="3" fill="#a0a0a0"/><rect x="842" y="116" width="1" height="3" fill="#a0a0a0"/><rect x="907" y="116" width="1" height="3" fill="#a0a0a0"/><rect x="972" y="116" width="1" height="3" fill="#a0a0a0"/></svg><div style="left:10px;top:147px;width:16px;height:129px;background:#a0a0a0;"></div><div style="left:10px;top:278px;width:16px;height:290px;background:#fff;"></div><svg style="left:0px;top:0px;overflow:hidden;" width="40" height="568" viewBox="0 0 40 568"><rect x="17" y="264" width="2" height="1" fill="#111"/><rect x="16" y="251" width="5" height="1" fill="#111"/><rect x="17" y="238" width="2" height="1" fill="#111"/><text x="15.16" y="230.6" font-size="12" font-family="Liberation Sans" fill="#111">1</text><rect x="17" y="213" width="2" height="1" fill="#111"/><rect x="16" y="200" width="5" height="1" fill="#111"/><rect x="17" y="187" width="2" height="1" fill="#111"/><text x="15.16" y="178.6" font-size="12" font-family="Liberation Sans" fill="#111">2</text><rect x="17" y="161" width="2" height="1" fill="#111"/><rect x="16" y="148" width="5" height="1" fill="#111"/><rect x="17" y="290" width="2" height="1" fill="#111"/><rect x="16" y="303" width="5" height="1" fill="#111"/><rect x="17" y="316" width="2" height="1" fill="#111"/><text x="15.16" y="332.6" font-size="12" font-family="Liberation Sans" fill="#111">1</text><rect x="17" y="341" width="2" height="1" fill="#111"/><rect x="16" y="354" width="5" height="1" fill="#111"/><rect x="17" y="367" width="2" height="1" fill="#111"/><text x="15.16" y="384.6" font-size="12" font-family="Liberation Sans" fill="#111">2</text><rect x="17" y="393" width="2" height="1" fill="#111"/><rect x="16" y="406" width="5" height="1" fill="#111"/><rect x="17" y="418" width="2" height="1" fill="#111"/><text x="15.16" y="435.6" font-size="12" font-family="Liberation Sans" fill="#111">3</text><rect x="17" y="444" width="2" height="1" fill="#111"/><rect x="16" y="457" width="5" height="1" fill="#111"/><rect x="17" y="470" width="2" height="1" fill="#111"/><text x="15.16" y="487.6" font-size="12" font-family="Liberation Sans" fill="#111">4</text><rect x="17" y="495" width="2" height="1" fill="#111"/><rect x="16" y="508" width="5" height="1" fill="#111"/><rect x="17" y="521" width="2" height="1" fill="#111"/><text x="15.16" y="538.6" font-size="12" font-family="Liberation Sans" fill="#111">5</text><rect x="17" y="547" width="2" height="1" fill="#111"/><rect x="16" y="560" width="5" height="1" fill="#111"/></svg><svg style="left:184px;top:92px;" width="11" height="29" viewBox="0 0 11 29"><rect x="2.5" y="0.5" width="7" height="6" fill="#f0f0f0" stroke="#000"/><path d="M0.5 6.5 H10.5 V9.5 L5.5 14.5 L0.5 9.5 Z" fill="#f0f0f0" stroke="#000"/><path d="M5.5 14.5 L10.5 19.5 V22.5 H0.5 V19.5 Z" fill="#f0f0f0" stroke="#000"/><rect x="0.5" y="22.5" width="10" height="6" fill="#f0f0f0" stroke="#000"/></svg><svg style="left:1002px;top:92px;" width="11" height="24" viewBox="0 0 11 24"><rect x="2.5" y="0.5" width="7" height="6" fill="#f0f0f0" stroke="#000"/><path d="M5.5 14.5 L10.5 19.5 V22.5 H0.5 V19.5 Z" fill="#f0f0f0" stroke="#000"/></svg><div style="left:4px;top:274px;width:7px;height:6px;background:#fafafa;border:1px solid #000;"></div><div style="left:189.3px;top:274.41px;font:normal normal 21px/28px 'Liberation Serif',sans-serif;color:#000;white-space:pre;transform:scaleX(0.9928);transform-origin:0 0;">im gay(second window)</div><div style="left:1165px;top:90px;width:17px;height:478px;background:#fff;border-left:1px solid #c8c8c8;border-right:1px solid #c8c8c8;"></div><div style="left:1165px;top:106px;width:17px;height:1px;background:#a8a8a8;"></div><svg style="left:1169px;top:96px;" width="9" height="6" viewBox="0 0 9 6"><path d="M0.8 5 L4.5 1.2 L8.2 5" fill="none" stroke="#5a5a5a" stroke-width="1.4"/></svg><div style="left:1165px;top:107px;width:17px;height:126px;background:#dcdcdc;border:1px solid #a8a8a8;border-top:none;"></div><div style="left:1170px;top:166px;width:7px;height:1.6px;background:#5a5a5a;"></div><div style="left:1170px;top:169px;width:7px;height:1.6px;background:#5a5a5a;"></div><div style="left:1170px;top:172px;width:7px;height:1.6px;background:#5a5a5a;"></div><div style="left:1165px;top:551px;width:17px;height:1px;background:#a8a8a8;"></div><svg style="left:1169px;top:557px;" width="9" height="6" viewBox="0 0 9 6"><path d="M0.8 1 L4.5 4.8 L8.2 1" fill="none" stroke="#5a5a5a" stroke-width="1.4"/></svg><div style="left:1182px;top:90px;width:2px;height:478px;background:#fff;"></div><div style="left:0px;top:569px;width:1184px;height:24px;background:#fff;"></div><div style="left:0px;top:569px;width:1184px;height:1px;background:#f0f0f0;"></div><div style="left:0px;top:570px;width:1184px;height:1px;background:#a0a0a0;"></div><div style="left:0px;top:571px;width:1184px;height:1px;background:#fff;"></div><div style="left:0px;top:572px;width:1184px;height:1px;background:#e8e8e8;"></div><div style="left:2.6px;top:574.84px;font:normal normal 12px/16px 'Liberation Sans',sans-serif;color:#000;white-space:pre;transform:scaleX(0.9226);transform-origin:0 0;">Page: 1/1</div><div style="left:129px;top:573px;width:1px;height:20px;background:#d7d7d7;"></div><div style="left:1023px;top:573px;width:1px;height:20px;background:#d7d7d7;"></div><div style="left:1053px;top:573px;width:1px;height:20px;background:#d7d7d7;"></div><div style="left:1133px;top:573px;width:1px;height:20px;background:#d7d7d7;"></div><div style="left:1029px;top:574.84px;font:normal normal 12px/16px 'Liberation Sans',sans-serif;color:#000;white-space:pre;transform:scaleX(0.8498);transform-origin:0 0;">INS</div><div style="left:1059px;top:574.84px;font:normal normal 12px/16px 'Liberation Sans',sans-serif;color:#000;white-space:pre;transform:scaleX(0.9992);transform-origin:0 0;">default</div><div style="left:1138px;top:573px;width:30px;height:20px;overflow:hidden;"><div style="left:1px;top:1.84px;font:normal normal 12px/16px 'Liberation Sans',sans-serif;color:#000;white-space:pre;transform:scaleX(0.9227);transform-origin:0 0;">en-GB</div></div><svg style="left:1171px;top:581px;" width="11" height="11" viewBox="0 0 11 11"><rect x="8" y="2" width="2" height="2" fill="#cdcdcd"/><rect x="5" y="5" width="2" height="2" fill="#cdcdcd"/><rect x="8" y="5" width="2" height="2" fill="#cdcdcd"/><rect x="2" y="8" width="2" height="2" fill="#cdcdcd"/><rect x="5" y="8" width="2" height="2" fill="#cdcdcd"/><rect x="8" y="8" width="2" height="2" fill="#cdcdcd"/></svg><div style="left:1183px;top:572px;width:1px;height:21px;background:#d4d8dc;"></div><div style="left:0px;top:592px;width:1184px;height:1px;background:#8e98a6;"></div></div>
<div style="left:0px;top:870px;width:1600px;height:30px;background:#6e000c;"></div><svg style="left:10px;top:877px;" width="17" height="16" viewBox="0 0 17 16"><path d="M0 2.6 L7 1.5 V7.5 H0 Z M8 1.35 L16.5 0 V7.5 H8 Z M0 8.5 H7 V14.5 L0 13.4 Z M8 8.5 H16.5 V16 L8 14.65 Z" fill="#fff"/></svg><div style="left:39px;top:870px;width:117px;height:30px;background:#7e1920;"></div><div style="left:40px;top:898px;width:116px;height:2px;background:#f4a3a7;"></div><div style="left:67px;top:876.84px;font:normal normal 12px/16px 'Liberation Sans',sans-serif;color:#0a0001;white-space:pre;transform:scaleX(0.9914);transform-origin:0 0;">Total Comma...</div><svg style="left:46px;top:877px;" width="16" height="16" viewBox="0 0 16 16"><rect x="0.5" y="0.5" width="15" height="15" rx="1" fill="#2347d8" stroke="#0a1a6a"/><rect x="3.5" y="1" width="8" height="5" fill="#e8e8f8"/><rect x="8.5" y="1.5" width="2" height="3.5" fill="#2347d8"/><rect x="2.5" y="8.5" width="11" height="7" fill="#fff"/><path d="M3 10.5 H13 M3 13 H13" stroke="#e03040" stroke-width="1.4"/></svg><div style="left:160px;top:898px;width:108px;height:2px;background:#f4a3a7;"></div><div style="left:184px;top:876.84px;font:normal normal 12px/16px 'Liberation Sans',sans-serif;color:#0a0001;white-space:pre;transform:scaleX(0.9715);transform-origin:0 0;">наб on Twitte...</div><svg style="left:163px;top:876px;" width="17" height="18" viewBox="0 0 17 18"><defs><linearGradient id="ffg" x1="0" y1="0" x2="1" y2="1"><stop offset="0" stop-color="#55c4f8"/><stop offset="1" stop-color="#1a78e0"/></linearGradient></defs><path d="M8.3 17 C3.5 17 0.4 13.5 0.4 9.5 C0.4 7 1.5 4.8 3 3.6 C3 4.5 3.3 5.2 3.8 5.6 C4.5 3.5 6.5 3 7.2 3.4 C8.8 2.8 9.6 1.5 9.8 0.4 C11.5 1.5 12.3 3 12.4 4.2 C13 3.9 13.3 3.4 13.4 2.8 C15.4 4.6 16.5 7 16.3 10 C16 14 12.8 17 8.3 17 Z" fill="url(#ffg)"/><circle cx="7.8" cy="9.2" r="3.3" fill="#3b2fa8"/><path d="M4.2 7.2 C5.2 6 7 5.8 8.2 6.4 C6.8 6.6 6.2 7.6 6.6 8.6 C5.6 8.6 4.6 8 4.2 7.2 Z" fill="#9fe0ff"/><path d="M3.2 10.2 C4.2 13.5 8.8 14.4 11.2 11.8 C9.6 14.8 4.4 15 3.2 10.2 Z" fill="#8fd6ff" opacity="0.8"/></svg><div style="left:277px;top:898px;width:108px;height:2px;background:#f4a3a7;"></div><div style="left:376px;top:898px;width:1px;height:2px;background:#6e000c;"></div><div style="left:377px;top:898px;width:8px;height:2px;background:#c2848a;"></div><div style="left:300px;top:876.84px;font:normal normal 12px/16px 'Liberation Sans',sans-serif;color:#0a0001;white-space:pre;transform:scaleX(0.9683);transform-origin:0 0;">Sublime Text 3</div><svg style="left:281px;top:877px;" width="16" height="16" viewBox="0 0 16 16"><rect x="0.5" y="1.5" width="15" height="12" rx="1.5" fill="#4a4a4a" stroke="#cfcfcf"/><text x="5" y="10.5" font-family="Liberation Sans" font-weight="bold" font-size="9" fill="#f59a23">S</text><rect x="0" y="14" width="16" height="1.5" fill="#bbb"/></svg><div style="left:394px;top:898px;width:108px;height:2px;background:#f4a3a7;"></div><div style="left:493px;top:898px;width:1px;height:2px;background:#6e000c;"></div><div style="left:494px;top:898px;width:8px;height:2px;background:#c2848a;"></div><div style="left:418px;top:876.84px;font:normal normal 12px/16px 'Liberation Sans',sans-serif;color:#0a0001;white-space:pre;transform:scaleX(0.9566);transform-origin:0 0;">Windows Co...</div><svg style="left:397px;top:879px;" width="17" height="13" viewBox="0 0 17 13"><rect x="0.5" y="0.5" width="16" height="12" fill="#000" stroke="#d8d8d8"/><rect x="0.5" y="0.5" width="16" height="2" fill="#e8e8e8"/><path d="M5.4 5.2 H3.2 V9.4 H5.4 M7 6 V6.9 M7 8.3 V9.2 M8.4 4.8 L10.6 9.6 M11.6 9.6 H14.2" fill="none" stroke="#fff" stroke-width="1.15"/><path d="M10.6 1.5 H11.6 M12.6 1.5 H13.6 M14.6 1.5 H15.4" stroke="#555" stroke-width="0.9"/></svg><div style="left:511px;top:870px;width:108px;height:30px;background:#7e1920;"></div><div style="left:511px;top:870px;width:53px;height:30px;background:#a25818;"></div><div style="left:511px;top:898px;width:108px;height:2px;background:#fff000;"></div><div style="left:535px;top:876.84px;font:normal normal 12px/16px 'Liberation Sans',sans-serif;color:#0a0001;white-space:pre;transform:scaleX(0.9326);transform-origin:0 0;">Gentleman.Ja...</div><svg style="left:514px;top:876px;" width="16" height="16" viewBox="0 0 16 16"><rect x="1" y="5" width="14" height="10.5" rx="1" fill="#f4f4f4" stroke="#777"/><path d="M1 5 L14 1 L14.8 3.5 L1.8 7.5 Z" fill="#333"/><path d="M4 4.6 L5.5 6.4 M8 3.4 L9.5 5.2 M12 2.2 L13.5 4" stroke="#fff" stroke-width="1.2"/><text x="2.2" y="14" font-family="Liberation Sans" font-weight="bold" font-size="7.5" fill="#d03030">3<tspan fill="#30a030">2</tspan><tspan fill="#3050d0">1</tspan></text></svg><div style="left:628px;top:898px;width:108px;height:2px;background:#f4a3a7;"></div><div style="left:652px;top:876.84px;font:normal normal 12px/16px 'Liberation Sans',sans-serif;color:#0a0001;white-space:pre;transform:scaleX(0.9112);transform-origin:0 0;">Process Explo...</div><svg style="left:631px;top:877px;" width="17" height="17" viewBox="0 0 17 17"><rect x="3" y="1" width="6" height="6" fill="#e44" transform="skewY(-8)"/><rect x="10" y="2" width="6" height="6" fill="#4b4" transform="skewY(-8)"/><rect x="3" y="8.5" width="6" height="6" fill="#48e" transform="skewY(-8)"/><rect x="10" y="9.5" width="6" height="6" fill="#fc3" transform="skewY(-8)"/><circle cx="6" cy="6" r="4" fill="#cfe6ff" stroke="#9ab" stroke-width="1.2"/><path d="M9 9 L13 14" stroke="#c90" stroke-width="2"/></svg><div style="left:745px;top:898px;width:108px;height:2px;background:#f4a3a7;"></div><div style="left:769px;top:876.84px;font:normal normal 12px/16px 'Liberation Sans',sans-serif;color:#0a0001;white-space:pre;transform:scaleX(0.9597);transform-origin:0 0;">#unjerk - Disc...</div><svg style="left:750px;top:879px;" width="13" height="13" viewBox="0 0 13 13"><path d="M1.5 0 H11.5 Q13 0 13 1.5 V13 L10.2 10.8 H1.5 Q0 10.8 0 9.3 V1.5 Q0 0 1.5 0 Z" fill="#7c8ee6"/><path d="M3.2 3 C4.6 2.2 8.4 2.2 9.8 3 C10.8 4.8 11.2 6.6 11 8.2 C10.2 8.8 9.4 9.1 8.7 9.2 L8.2 8.4 C7.1 8.7 5.9 8.7 4.8 8.4 L4.3 9.2 C3.6 9.1 2.8 8.8 2 8.2 C1.8 6.6 2.2 4.8 3.2 3 Z" fill="#fff"/><circle cx="5" cy="6.2" r="0.95" fill="#7c8ee6"/><circle cx="8" cy="6.2" r="0.95" fill="#7c8ee6"/></svg><div style="left:862px;top:898px;width:108px;height:2px;background:#f4a3a7;"></div><div style="left:885px;top:876.84px;font:normal normal 12px/16px 'Liberation Sans',sans-serif;color:#0a0001;white-space:pre;transform:scaleX(0.9741);transform-origin:0 0;">Abiword (Dis...</div><svg style="left:867px;top:879px;" width="14" height="14" viewBox="0 0 14 14"><circle cx="7" cy="7" r="6.3" fill="#dcdcdc" stroke="#111" stroke-width="1.3"/><path d="M7 7 L1.6 3.4 A6.3 6.3 0 0 1 6 0.8 Z" fill="#5fd35f"/><path d="M7 7 L12.4 10.6 A6.3 6.3 0 0 1 8 13.2 Z" fill="#d560d8"/><path d="M7 7 L13 5 A6.3 6.3 0 0 1 12.4 10.6 Z" fill="#d8e04a"/><path d="M7 7 L1 9 A6.3 6.3 0 0 1 1.6 3.4 Z" fill="#52cfe0"/><circle cx="7" cy="7" r="2.3" fill="#f4f4f4" stroke="#333" stroke-width="0.9"/><circle cx="7" cy="7" r="0.9" fill="#222"/></svg><div style="left:978px;top:898px;width:108px;height:2px;background:#f4a3a7;"></div><div style="left:1002px;top:876.84px;font:normal normal 12px/16px 'Liberation Sans',sans-serif;color:#0a0001;white-space:pre;transform:scaleX(0.9673);transform-origin:0 0;">*Untitled1:1 - ...</div><svg style="left:981px;top:876px;" width="17" height="17" viewBox="0 0 17 17"><defs><linearGradient id="ag1" gradientUnits="userSpaceOnUse" x1="1" y1="0" x2="16" y2="0"><stop offset="0" stop-color="#1cd2ff"/><stop offset="0.35" stop-color="#6fe4ff"/><stop offset="0.55" stop-color="#7fe6ff"/><stop offset="0.75" stop-color="#34b4d8"/><stop offset="1" stop-color="#1f6c8c"/></linearGradient></defs><path d="M12 11.6 C9 13.3 5.4 14.4 1.8 14.9 C3 10 5.5 4.7 8.5 1.8 C10.8 4.2 12.8 8 14 11.2" fill="none" stroke="url(#ag1)" stroke-width="1.75" stroke-linecap="round" stroke-linejoin="round"/><path d="M13.6 10.2 C14.4 12 15 13.6 15.5 15.1" fill="none" stroke="url(#ag1)" stroke-width="1.25" stroke-linecap="round"/><path d="M4 10 C5.2 6.8 6.8 4.1 8.3 2.7" fill="none" stroke="#fff" stroke-width="0.75" stroke-linecap="round" opacity="0.8"/></svg><div style="left:1090px;top:870px;width:115px;height:30px;background:#99000d;"></div><div style="left:1090px;top:898px;width:115px;height:2px;background:#f4a3a7;"></div><div style="left:1117px;top:876.84px;font:normal normal 12px/16px 'Liberation Sans',sans-serif;color:#0a0001;white-space:pre;transform:scaleX(0.9953);transform-origin:0 0;">*Untitled1:2 -...</div><svg style="left:1098px;top:876px;" width="17" height="17" viewBox="0 0 17 17"><defs><linearGradient id="ag1" gradientUnits="userSpaceOnUse" x1="1" y1="0" x2="16" y2="0"><stop offset="0" stop-color="#1cd2ff"/><stop offset="0.35" stop-color="#6fe4ff"/><stop offset="0.55" stop-color="#7fe6ff"/><stop offset="0.75" stop-color="#34b4d8"/><stop offset="1" stop-color="#1f6c8c"/></linearGradient></defs><path d="M12 11.6 C9 13.3 5.4 14.4 1.8 14.9 C3 10 5.5 4.7 8.5 1.8 C10.8 4.2 12.8 8 14 11.2" fill="none" stroke="url(#ag1)" stroke-width="1.75" stroke-linecap="round" stroke-linejoin="round"/><path d="M13.6 10.2 C14.4 12 15 13.6 15.5 15.1" fill="none" stroke="url(#ag1)" stroke-width="1.25" stroke-linecap="round"/><path d="M4 10 C5.2 6.8 6.8 4.1 8.3 2.7" fill="none" stroke="#fff" stroke-width="0.75" stroke-linecap="round" opacity="0.8"/></svg><svg style="left:1213px;top:879px;" width="15" height="12" viewBox="0 0 16 13"><path d="M3 1.5 C5 0.3 11 0.3 13 1.5 C14.8 4.5 15.6 8 15.2 11 C14 12 12.6 12.6 11.4 12.8 L10.5 11.3 C8.8 11.8 7.2 11.8 5.5 11.3 L4.6 12.8 C3.4 12.6 2 12 0.8 11 C0.4 8 1.2 4.5 3 1.5 Z" fill="#fff"/><circle cx="5.6" cy="7.2" r="1.5" fill="#6e000c"/><circle cx="10.4" cy="7.2" r="1.5" fill="#6e000c"/></svg><svg style="left:1222px;top:877px;" width="7" height="7" viewBox="0 0 7 7"><circle cx="3.5" cy="3.5" r="3.2" fill="#f04747"/></svg><svg style="left:1236px;top:876px;" width="17" height="17" viewBox="0 0 17 17"><ellipse cx="8.5" cy="11" rx="7.5" ry="3" fill="none" stroke="#e8641a" stroke-width="1.2"/><path d="M0.8 0.8 H5.2 L16.2 16.2 H11.8 Z" fill="#0a0a0a" stroke="#e8e8e8" stroke-width="0.7"/><path d="M13.6 0.8 H16 L3.4 16.2 H1 Z" fill="#0a0a0a" stroke="#e8e8e8" stroke-width="0.7"/></svg><div style="left:1261px;top:877px;width:15px;height:16px;background:#ececec;border:1px solid #fff;"></div><svg style="left:1284px;top:877px;" width="16" height="16" viewBox="0 0 16 16"><rect x="0.5" y="0.5" width="15" height="15" rx="5" fill="#fff" stroke="#0a8a9a" stroke-width="1.6"/><text x="3.2" y="12" font-family="Liberation Sans" font-weight="bold" font-size="12" fill="#0a8a9a">e</text></svg><svg style="left:1308px;top:879px;" width="16" height="13" viewBox="0 0 16 13"><rect x="0.5" y="0.5" width="15" height="12" fill="#000" stroke="#d8d8d8"/><rect x="0.5" y="0.5" width="15" height="2" fill="#e8e8e8"/><path d="M5 5.2 H3 V9.2 H5 M6.6 6 V6.8 M6.6 8.2 V9 M8 4.8 L10 9.4 M11 9.4 H13.4" fill="none" stroke="#fff" stroke-width="1.1"/><path d="M10 1.5 H11 M12 1.5 H13 M14 1.5 H14.8" stroke="#555" stroke-width="0.9"/></svg><svg style="left:1332px;top:879px;" width="16" height="13" viewBox="0 0 16 13"><rect x="0.5" y="0.5" width="15" height="12" fill="#000" stroke="#d8d8d8"/><rect x="0.5" y="0.5" width="15" height="2" fill="#e8e8e8"/><path d="M5 5.2 H3 V9.2 H5 M6.6 6 V6.8 M6.6 8.2 V9 M8 4.8 L10 9.4 M11 9.4 H13.4" fill="none" stroke="#fff" stroke-width="1.1"/><path d="M10 1.5 H11 M12 1.5 H13 M14 1.5 H14.8" stroke="#555" stroke-width="0.9"/></svg><svg style="left:1356px;top:878px;" width="16" height="15" viewBox="0 0 16 15"><rect x="3" y="2" width="12" height="9" fill="#6caa4a" stroke="#2c5a1c"/><rect x="5" y="4" width="4" height="3" fill="#d9c46a"/><rect x="10" y="4" width="3" height="5" fill="#c7c7c7"/><path d="M1.5 0 V14" stroke="#bbb" stroke-width="1.3"/><path d="M4 11 V13 H13 V11" stroke="#c9a63a" stroke-width="1"/></svg><svg style="left:1380px;top:877px;" width="16" height="16" viewBox="0 0 16 16"><rect x="0" y="1" width="16" height="14" rx="1.5" fill="#1d4fc4"/><rect x="0" y="1" width="16" height="3" fill="#3d7be8"/><circle cx="10" cy="10" r="4.3" fill="#d8d8d8" stroke="#888"/><path d="M8 8 L12 12 M12 8 L8 12" stroke="#d82020" stroke-width="1.8"/></svg><svg style="left:1403px;top:876px;" width="18" height="18" viewBox="0 0 18 18"><path d="M5 1.2 C9 0.2 14.5 1 16.5 5 C18 9 16.8 14.2 13 16.4 C9 18 3.5 17.4 1.6 13 C0.2 9.5 0.6 3 5 1.2 Z" fill="#6aa820"/><path d="M5.6 9.4 L8 11.8 L12.2 7" stroke="#fff" stroke-width="1.9" fill="none"/></svg><svg style="left:1427px;top:878px;" width="17" height="15" viewBox="0 0 17 15"><rect x="3.75" y="1.25" width="12" height="8.5" fill="none" stroke="#fff" stroke-width="1.5"/><path d="M9.75 10 V13 M6 13.75 H13.5" stroke="#fff" stroke-width="1.5"/><rect x="0.75" y="2.5" width="4.5" height="3.5" fill="#6e000c" stroke="#fff" stroke-width="1.2"/><path d="M3 6 V14.5" stroke="#fff" stroke-width="1.4"/><path d="M2 3.8 L3 5 L4.2 3.8" stroke="#fff" stroke-width="0.8" fill="none"/></svg><svg style="left:1452px;top:877px;" width="18" height="16" viewBox="0 0 18 16"><path d="M1 6 H3.8 L8 1.8 V14.2 L3.8 10 H1 Z" fill="none" stroke="#fff" stroke-width="1.4" stroke-linejoin="round"/><path d="M10.4 5.6 Q12.2 8 10.4 10.4" fill="none" stroke="#fff" stroke-width="1.3"/><path d="M12.8 3.8 Q15.8 8 12.8 12.2" fill="none" stroke="#fff" stroke-width="1.3"/><path d="M15.2 1.8 Q19 8 15.2 14.2" fill="none" stroke="#b06068" stroke-width="1"/></svg><div style="left:1478px;top:876.84px;font:normal normal 12px/16px 'Liberation Sans',sans-serif;color:#fff;white-space:pre;transform:scaleX(0.8460);transform-origin:0 0;">ENG</div><div style="left:1513px;top:876.84px;font:normal normal 12px/16px 'Liberation Sans',sans-serif;color:#1e0003;white-space:pre;transform:scaleX(0.9324);transform-origin:0 0;">22:58</div><svg style="left:1559px;top:877px;" width="17" height="17" viewBox="0 0 17 17"><path d="M1.25 1.25 H15.75 V12.25 H10.8 L8.4 14.8 L6.1 12.25 H1.25 Z" fill="none" stroke="#fff" stroke-width="1.5" stroke-linejoin="miter"/></svg><div style="left:1595px;top:870px;width:1px;height:30px;background:#95505a;"></div>
</body></html>
